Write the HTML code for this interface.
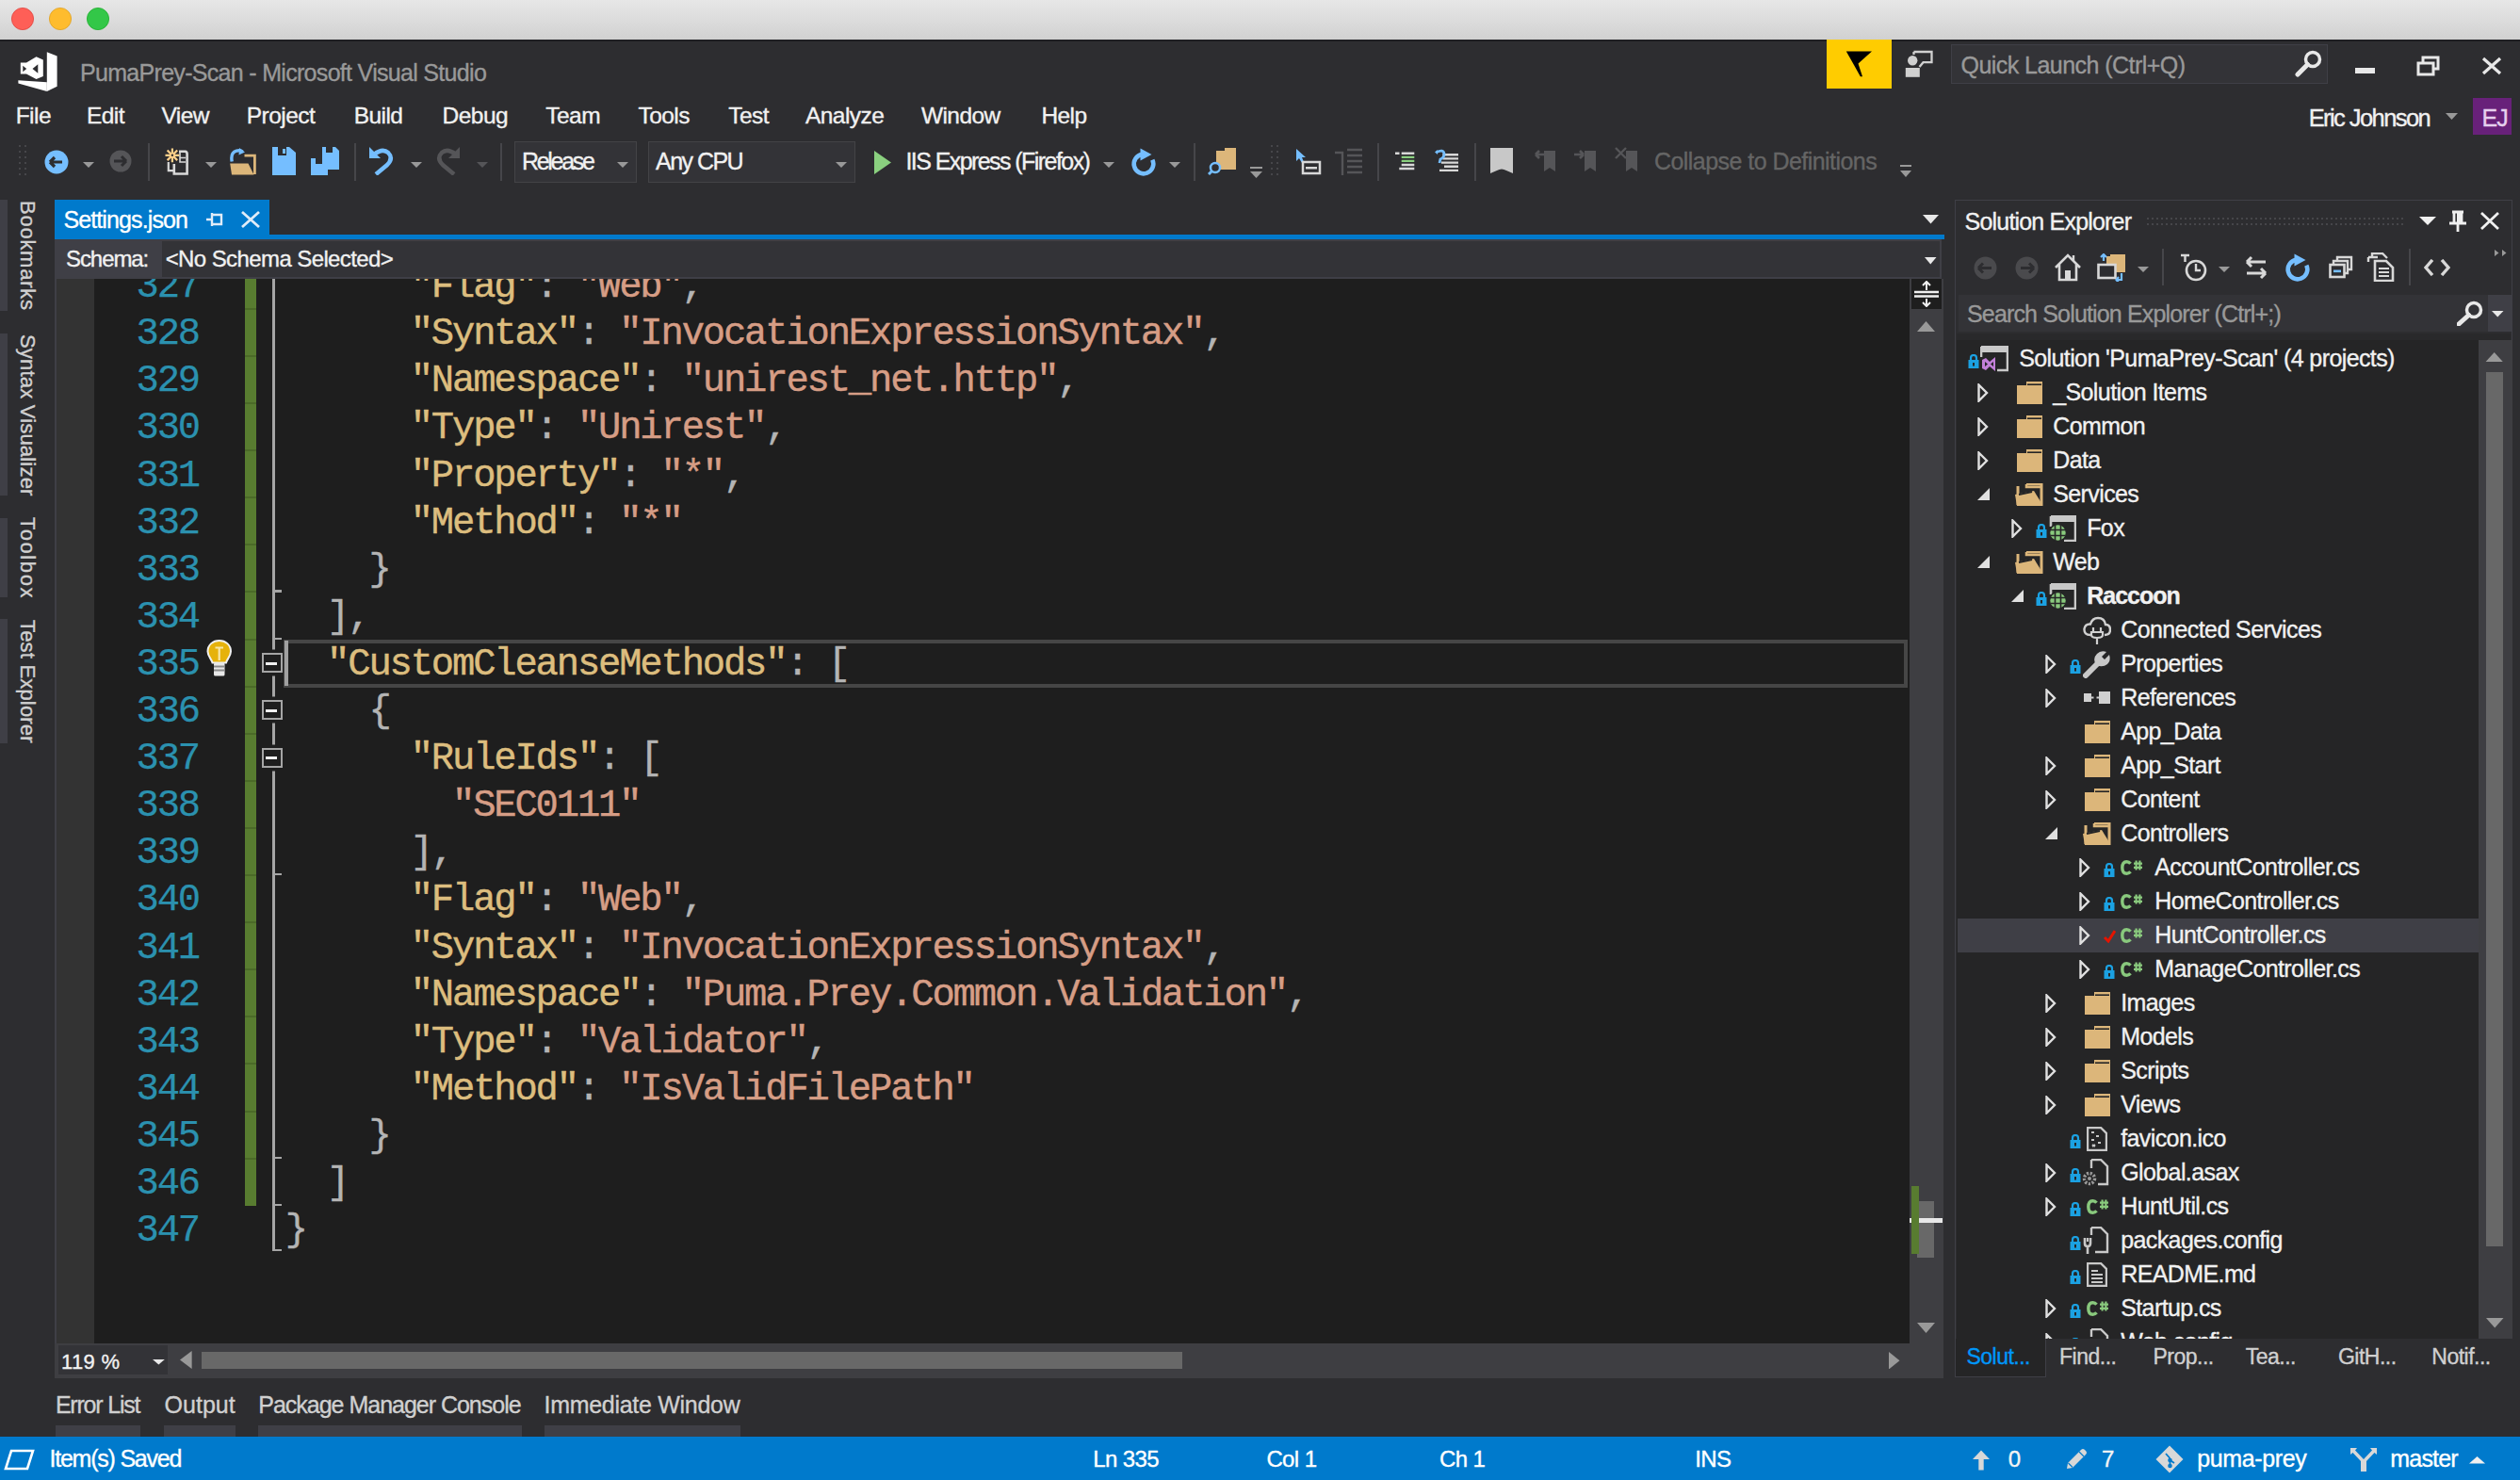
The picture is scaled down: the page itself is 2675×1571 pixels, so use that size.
<!DOCTYPE html>
<html><head><meta charset="utf-8"><style>
html,body{margin:0;padding:0;}
body{width:2675px;height:1571px;overflow:hidden;position:relative;background:#2d2d30;font-family:"Liberation Sans",sans-serif;}
.t{-webkit-text-stroke:0.35px currentColor;}
</style></head><body>
<div style="position:absolute;left:0px;top:0px;width:2675px;height:42px;background:linear-gradient(#e7e7e7,#d1d1d1);"></div>
<div style="position:absolute;left:0px;top:42px;width:2675px;height:2px;background:#1f1f23;"></div>
<svg style="position:absolute;left:11px;top:7px;" width="26" height="26" viewBox="0 0 26 26"><circle cx="13" cy="13" r="11.6" fill="#fe5f57" stroke="#e0443e" stroke-width="0.8"/></svg>
<svg style="position:absolute;left:50.8px;top:7px;" width="26" height="26" viewBox="0 0 26 26"><circle cx="13" cy="13" r="11.6" fill="#febc2e" stroke="#dea123" stroke-width="0.8"/></svg>
<svg style="position:absolute;left:90.9px;top:7px;" width="26" height="26" viewBox="0 0 26 26"><circle cx="13" cy="13" r="11.6" fill="#33c748" stroke="#1dad2b" stroke-width="0.8"/></svg>
<svg style="position:absolute;left:15px;top:50px;" width="55" height="52" viewBox="15 50 55 52"><path d="M49.8 55.3 L60.6 59.5 L60.6 91.8 L49.8 97 Z" fill="#fff"/><path d="M19.4 85.2 L49.8 87.3 L49.8 97 L19.4 88.4 Z" fill="#fff"/><path d="M21.8 66.5 L28 66.5 L38.5 60.3 L45.8 63.5 L45.8 81 L38.5 84 L28 78.5 L21.8 78.5 Z M24.3 69.8 L28.2 73 L24.3 76.2 Z M34.5 73 L40.3 68.3 L40.3 77.8 Z" fill="#fff" fill-rule="evenodd"/></svg>
<div class="t" style="position:absolute;left:85px;top:60.93px;font-family:'Liberation Sans', sans-serif;font-size:25px;line-height:32px;color:#999999;white-space:pre;font-weight:normal;letter-spacing:-0.691px;">PumaPrey-Scan - Microsoft Visual Studio</div>
<div style="position:absolute;left:1938.5px;top:42px;width:69.2px;height:52.4px;background:#ffcc00;"></div>
<svg style="position:absolute;left:1955px;top:50px;" width="36" height="36" viewBox="1955 50 36 36"><path d="M1959.8 54.6 L1987 54.6 L1972.5 67.5 L1977 81.2 L1974.8 81.2 L1968 69 Z" fill="#000"/></svg>
<svg style="position:absolute;left:2020px;top:52px;" width="34" height="32" viewBox="2020 52 34 32"><circle cx="2030.2" cy="64.2" r="5.2" fill="#d0d0d0"/><path d="M2022.8 72 L2037.8 72 L2037.8 81.8 L2022.8 81.8 Z" fill="#d0d0d0"/><path d="M2031.5 55 L2050.5 55 L2050.5 66.2 L2041.5 66.2 L2037.5 71 M2031.5 55 L2031.5 58" fill="none" stroke="#d0d0d0" stroke-width="2.3"/></svg>
<div style="position:absolute;left:2071px;top:46.7px;width:400px;height:42.8px;background:#333337;border:1.5px solid #3f3f46;box-sizing:border-box"></div>
<div class="t" style="position:absolute;left:2081.5px;top:53.33px;font-family:'Liberation Sans', sans-serif;font-size:25px;line-height:32px;color:#999999;white-space:pre;font-weight:normal;letter-spacing:-0.545px;">Quick Launch (Ctrl+Q)</div>
<svg style="position:absolute;left:2436px;top:53px;" width="30" height="29" viewBox="0 0 30 29"><circle cx="19" cy="10" r="7.5" fill="none" stroke="#e8e8e8" stroke-width="3.5"/><path d="M13.5 15.5 L3 26" stroke="#e8e8e8" stroke-width="5" stroke-linecap="round"/></svg>
<div style="position:absolute;left:2500px;top:71.5px;width:21px;height:6.5px;background:#e8e8e8;"></div>
<svg style="position:absolute;left:2565px;top:59px;" width="26" height="22" viewBox="0 0 26 22"><rect x="7" y="2" width="16" height="12" fill="none" stroke="#e8e8e8" stroke-width="3"/><rect x="2" y="8" width="16" height="12" fill="#2d2d30" stroke="#e8e8e8" stroke-width="3"/></svg>
<svg style="position:absolute;left:2633px;top:59px;" width="24" height="22" viewBox="0 0 24 22"><path d="M3 3 L21 19 M21 3 L3 19" stroke="#e8e8e8" stroke-width="3.2"/></svg>
<div class="t" style="position:absolute;left:16.7px;top:107.21px;font-family:'Liberation Sans', sans-serif;font-size:24.5px;line-height:32px;color:#f1f1f1;white-space:pre;font-weight:normal;letter-spacing:-0.55px;">File</div>
<div class="t" style="position:absolute;left:92px;top:107.21px;font-family:'Liberation Sans', sans-serif;font-size:24.5px;line-height:32px;color:#f1f1f1;white-space:pre;font-weight:normal;letter-spacing:-0.55px;">Edit</div>
<div class="t" style="position:absolute;left:171.4px;top:107.21px;font-family:'Liberation Sans', sans-serif;font-size:24.5px;line-height:32px;color:#f1f1f1;white-space:pre;font-weight:normal;letter-spacing:-0.55px;">View</div>
<div class="t" style="position:absolute;left:261.8px;top:107.21px;font-family:'Liberation Sans', sans-serif;font-size:24.5px;line-height:32px;color:#f1f1f1;white-space:pre;font-weight:normal;letter-spacing:-0.55px;">Project</div>
<div class="t" style="position:absolute;left:375.7px;top:107.21px;font-family:'Liberation Sans', sans-serif;font-size:24.5px;line-height:32px;color:#f1f1f1;white-space:pre;font-weight:normal;letter-spacing:-0.55px;">Build</div>
<div class="t" style="position:absolute;left:469.6px;top:107.21px;font-family:'Liberation Sans', sans-serif;font-size:24.5px;line-height:32px;color:#f1f1f1;white-space:pre;font-weight:normal;letter-spacing:-0.55px;">Debug</div>
<div class="t" style="position:absolute;left:579.3px;top:107.21px;font-family:'Liberation Sans', sans-serif;font-size:24.5px;line-height:32px;color:#f1f1f1;white-space:pre;font-weight:normal;letter-spacing:-0.55px;">Team</div>
<div class="t" style="position:absolute;left:677.5px;top:107.21px;font-family:'Liberation Sans', sans-serif;font-size:24.5px;line-height:32px;color:#f1f1f1;white-space:pre;font-weight:normal;letter-spacing:-0.55px;">Tools</div>
<div class="t" style="position:absolute;left:773.2px;top:107.21px;font-family:'Liberation Sans', sans-serif;font-size:24.5px;line-height:32px;color:#f1f1f1;white-space:pre;font-weight:normal;letter-spacing:-0.55px;">Test</div>
<div class="t" style="position:absolute;left:855px;top:107.21px;font-family:'Liberation Sans', sans-serif;font-size:24.5px;line-height:32px;color:#f1f1f1;white-space:pre;font-weight:normal;letter-spacing:-0.55px;">Analyze</div>
<div class="t" style="position:absolute;left:977.9px;top:107.21px;font-family:'Liberation Sans', sans-serif;font-size:24.5px;line-height:32px;color:#f1f1f1;white-space:pre;font-weight:normal;letter-spacing:-0.55px;">Window</div>
<div class="t" style="position:absolute;left:1105.4px;top:107.21px;font-family:'Liberation Sans', sans-serif;font-size:24.5px;line-height:32px;color:#f1f1f1;white-space:pre;font-weight:normal;letter-spacing:-0.55px;">Help</div>
<div class="t" style="position:absolute;left:2450.7px;top:108.66px;font-family:'Liberation Sans', sans-serif;font-size:25.5px;line-height:33px;color:#f1f1f1;white-space:pre;font-weight:normal;letter-spacing:-1.584px;">Eric Johnson</div>
<svg style="position:absolute;left:2596px;top:120px;" width="14" height="8" viewBox="0 0 14 8"><path d="M0 0 L13 0 L6.5 7 Z" fill="#999"/></svg>
<div style="position:absolute;left:2625px;top:104px;width:40.5px;height:39px;background:#68217a;"></div>
<div class="t" style="position:absolute;left:2634.5px;top:109.33px;font-family:'Liberation Sans', sans-serif;font-size:25px;line-height:32px;color:#e6d0ee;white-space:pre;font-weight:normal;letter-spacing:-1px;">EJ</div>
<svg style="position:absolute;left:20px;top:154px;" width="10" height="34" viewBox="0 0 10 34"><rect x="0" y="0" width="2" height="2" fill="#46464a"/><rect x="6" y="0" width="2" height="2" fill="#46464a"/><rect x="0" y="6" width="2" height="2" fill="#46464a"/><rect x="6" y="6" width="2" height="2" fill="#46464a"/><rect x="0" y="12" width="2" height="2" fill="#46464a"/><rect x="6" y="12" width="2" height="2" fill="#46464a"/><rect x="0" y="18" width="2" height="2" fill="#46464a"/><rect x="6" y="18" width="2" height="2" fill="#46464a"/><rect x="0" y="24" width="2" height="2" fill="#46464a"/><rect x="6" y="24" width="2" height="2" fill="#46464a"/><rect x="0" y="30" width="2" height="2" fill="#46464a"/><rect x="6" y="30" width="2" height="2" fill="#46464a"/></svg>
<svg style="position:absolute;left:47px;top:158.5px;" width="26" height="26" viewBox="0 0 26 26"><circle cx="13" cy="13" r="12.5" fill="#75beff"/><path d="M6 13 L19 13 M6 13 L11 8 M6 13 L11 18" stroke="#2d2d30" stroke-width="3.2" fill="none"/></svg>
<svg style="position:absolute;left:88px;top:170px;" width="13" height="9" viewBox="0 0 13 9"><path d="M0 2 L12 2 L6 8 Z" fill="#999"/></svg>
<svg style="position:absolute;left:116px;top:159px;" width="24" height="24" viewBox="0 0 24 24"><circle cx="12" cy="12" r="11.5" fill="#555558"/><path d="M18 12 L5 12 M18 12 L13 7 M18 12 L13 17" stroke="#2d2d30" stroke-width="3" fill="none"/></svg>
<div style="position:absolute;left:157px;top:152px;width:2px;height:39.69999999999999px;background:#46464a;"></div>
<svg style="position:absolute;left:174px;top:155px;" width="28" height="33" viewBox="174 155 28 33"><path d="M190 160.8 L196.5 160.8 Q198.6 161 198.6 163.5 L198.6 184.5 L184.8 184.5 L184.8 174" fill="none" stroke="#d8d8d8" stroke-width="2.6"/><path d="M178.8 172 L178.8 181.2 L184 181.2" fill="none" stroke="#d8d8d8" stroke-width="2.2"/><path d="M191 167.5 L197 167.5 M191 162 L191 172 L197 172" fill="none" stroke="#d8d8d8" stroke-width="1.6"/><g stroke="#ffd08a" stroke-width="2.2"><path d="M182.9 157.4 L182.9 172.2 M175.5 164.8 L190.3 164.8 M177.6 159.5 L188.2 170.1 M188.2 159.5 L177.6 170.1"/></g><circle cx="182.9" cy="164.8" r="1.2" fill="#2d2d30"/></svg>
<svg style="position:absolute;left:218px;top:170px;" width="13" height="9" viewBox="0 0 13 9"><path d="M0 2 L12 2 L6 8 Z" fill="#999"/></svg>
<svg style="position:absolute;left:242px;top:155px;" width="32" height="33" viewBox="242 155 32 33"><path d="M259.5 165.2 L270.4 165.2 L270.4 185" fill="none" stroke="#dcb67a" stroke-width="2.8"/><path d="M244.2 173.5 L263.5 173.5 L269.5 185.6 L246 185.6 Z" fill="#dcb67a"/><path d="M246.2 171.5 Q244.5 162 251 160.2 Q255 159 257.5 161" fill="none" stroke="#75beff" stroke-width="3.4"/><path d="M254 157 L260 161.5 L253.5 164.5 Z" fill="#75beff"/></svg>
<svg style="position:absolute;left:289px;top:156px;" width="26" height="30" viewBox="0 0 26 30"><path d="M0 0 L18 0 L25 6 L25 30 L0 30 Z" fill="#75beff"/><rect x="6" y="0" width="9" height="9" fill="#2d2d30"/><rect x="11" y="2" width="3" height="5" fill="#75beff"/></svg>
<svg style="position:absolute;left:330px;top:156px;" width="31" height="31" viewBox="0 0 31 31"><path d="M12 0 L26 0 L30 4 L30 24 L12 24 Z" fill="#75beff"/><rect x="16" y="0" width="7" height="6" fill="#2d2d30"/><path d="M0 12 L14 12 L18 16 L18 30 L0 30 Z" fill="#75beff"/><rect x="5" y="12" width="7" height="6" fill="#2d2d30"/></svg>
<div style="position:absolute;left:375.7px;top:152px;width:2px;height:39.69999999999999px;background:#46464a;"></div>
<svg style="position:absolute;left:392px;top:156px;" width="27" height="30" viewBox="0 0 27 30"><path d="M5 8 Q14 1 20 6 Q26 12 19 19 L7 29" stroke="#75beff" stroke-width="4.5" fill="none"/><path d="M0 0 L0 12 L12 12 Z" fill="#75beff"/></svg>
<svg style="position:absolute;left:435.7px;top:170px;" width="13" height="9" viewBox="0 0 13 9"><path d="M0 2 L12 2 L6 8 Z" fill="#999"/></svg>
<svg style="position:absolute;left:463px;top:156px;" width="26" height="30" viewBox="0 0 26 30"><path d="M21 8 Q12 1 6 6 Q0 12 7 19 L19 29" stroke="#555558" stroke-width="4.5" fill="none"/><path d="M25 0 L25 12 L13 12 Z" fill="#555558"/></svg>
<svg style="position:absolute;left:505.7px;top:170px;" width="13" height="9" viewBox="0 0 13 9"><path d="M0 2 L12 2 L6 8 Z" fill="#555558"/></svg>
<div style="position:absolute;left:531.4px;top:152px;width:2px;height:39.69999999999999px;background:#46464a;"></div>
<div style="position:absolute;left:546px;top:150.3px;width:129.7px;height:43.3px;background:#333337;border:1.5px solid #434346;box-sizing:border-box"></div>
<div class="t" style="position:absolute;left:553.9px;top:155.33px;font-family:'Liberation Sans', sans-serif;font-size:25px;line-height:32px;color:#f1f1f1;white-space:pre;font-weight:normal;letter-spacing:-2.272px;">Release</div>
<svg style="position:absolute;left:655.4px;top:170px;" width="13" height="9" viewBox="0 0 13 9"><path d="M0 2 L12 2 L6 8 Z" fill="#999"/></svg>
<div style="position:absolute;left:688.1px;top:150.3px;width:219.6px;height:43.3px;background:#333337;border:1.5px solid #434346;box-sizing:border-box"></div>
<div class="t" style="position:absolute;left:696px;top:155.33px;font-family:'Liberation Sans', sans-serif;font-size:25px;line-height:32px;color:#f1f1f1;white-space:pre;font-weight:normal;letter-spacing:-1.535px;">Any CPU</div>
<svg style="position:absolute;left:886.9px;top:170px;" width="13" height="9" viewBox="0 0 13 9"><path d="M0 2 L12 2 L6 8 Z" fill="#999"/></svg>
<svg style="position:absolute;left:928px;top:159.5px;" width="19" height="25" viewBox="0 0 19 25"><path d="M0 0 L18 12.5 L0 25 Z" fill="#8ad07f"/></svg>
<div class="t" style="position:absolute;left:961.4px;top:155.33px;font-family:'Liberation Sans', sans-serif;font-size:25px;line-height:32px;color:#f1f1f1;white-space:pre;font-weight:normal;letter-spacing:-1.566px;">IIS Express (Firefox)</div>
<svg style="position:absolute;left:1171px;top:170px;" width="13" height="9" viewBox="0 0 13 9"><path d="M0 2 L12 2 L6 8 Z" fill="#999"/></svg>
<svg style="position:absolute;left:1197.5px;top:156.5px;" width="32" height="33" viewBox="1197.5 156.5 32 33"><path d="M1222.83 169.15 A10.3 10.3 0 1 1 1211.71 163.36" stroke="#75beff" stroke-width="4.6" fill="none"/><path d="M1210.00 157.00 L1222.00 163.50 L1210.00 170.00 Z" fill="#75beff"/></svg>
<svg style="position:absolute;left:1241px;top:170px;" width="13" height="9" viewBox="0 0 13 9"><path d="M0 2 L12 2 L6 8 Z" fill="#999"/></svg>
<div style="position:absolute;left:1266.9px;top:152px;width:2px;height:39.69999999999999px;background:#46464a;"></div>
<svg style="position:absolute;left:1282px;top:156px;" width="31" height="31" viewBox="0 0 31 31"><path d="M9 4 L18 4 L18 1 L30 1 L30 24 L9 24 Z" fill="#dcb67a"/><circle cx="8" cy="22" r="5" fill="#2d2d30" stroke="#75beff" stroke-width="2.5"/><path d="M4.5 25.5 L1 29" stroke="#75beff" stroke-width="3"/></svg>
<svg style="position:absolute;left:1326.8px;top:176.8px;" width="14" height="13" viewBox="0 0 14 13"><rect x="0" y="0" width="13" height="2" fill="#999"/><path d="M0 5 L13 5 L6.5 12 Z" fill="#999"/></svg>
<svg style="position:absolute;left:1349px;top:154px;" width="10" height="34" viewBox="0 0 10 34"><rect x="0" y="0" width="2" height="2" fill="#46464a"/><rect x="6" y="0" width="2" height="2" fill="#46464a"/><rect x="0" y="6" width="2" height="2" fill="#46464a"/><rect x="6" y="6" width="2" height="2" fill="#46464a"/><rect x="0" y="12" width="2" height="2" fill="#46464a"/><rect x="6" y="12" width="2" height="2" fill="#46464a"/><rect x="0" y="18" width="2" height="2" fill="#46464a"/><rect x="6" y="18" width="2" height="2" fill="#46464a"/><rect x="0" y="24" width="2" height="2" fill="#46464a"/><rect x="6" y="24" width="2" height="2" fill="#46464a"/><rect x="0" y="30" width="2" height="2" fill="#46464a"/><rect x="6" y="30" width="2" height="2" fill="#46464a"/></svg>
<svg style="position:absolute;left:1375px;top:157px;" width="28" height="29" viewBox="0 0 28 29"><path d="M1 1 L1 14 L4 11 L7 16 L9 15 L7 10 L11 10 Z" fill="#75beff"/><rect x="8" y="15" width="18" height="12" fill="none" stroke="#d8d8d8" stroke-width="2.5"/><rect x="11" y="20" width="12" height="2.5" fill="#d8d8d8"/></svg>
<svg style="position:absolute;left:1416px;top:156px;" width="31" height="31" viewBox="0 0 31 31"><g stroke="#555558" stroke-width="2.4" fill="none"><path d="M1 6 L9 6 L9 30"/><path d="M14 3 L30 3 M14 9 L30 9 M14 15 L30 15 M14 21 L30 21 M14 27 L30 27"/></g></svg>
<div style="position:absolute;left:1461.5px;top:152px;width:2px;height:39.69999999999999px;background:#46464a;"></div>
<svg style="position:absolute;left:1479px;top:159px;" width="24" height="23" viewBox="0 0 24 23"><g stroke-width="2.4"><path d="M2 3.8 L6.5 3.8 M8.7 3.8 L22.3 3.8 M8.7 16 L22.3 16 M6.3 20 L22.3 20" stroke="#d8d8d8"/><path d="M8.7 7.9 L22.3 7.9 M8.7 11.9 L22.3 11.9" stroke="#8ad07f"/></g></svg>
<svg style="position:absolute;left:1521px;top:157px;" width="29" height="29" viewBox="0 0 29 29"><g stroke="#d8d8d8" stroke-width="2.4"><path d="M10.4 7.3 L27 7.3 M10.4 11.4 L27 11.4 M9 15.6 L27 15.6 M12 19.7 L27 19.7 M7 23.9 L27 23.9"/></g><path d="M2 4.5 L5 2 L5 7 Z" fill="#75beff"/><path d="M4 4.5 Q11 1 12 6 Q12.5 10 8 12 L7 16" stroke="#75beff" stroke-width="2.8" fill="none"/></svg>
<div style="position:absolute;left:1565px;top:152px;width:2px;height:39.69999999999999px;background:#46464a;"></div>
<svg style="position:absolute;left:1582px;top:157px;" width="25" height="28" viewBox="0 0 25 28"><path d="M0 0 L24 0 L24 27 L17 24 Q12 21 7 24 L0 27 Z" fill="#c8c8c8"/></svg>
<svg style="position:absolute;left:1628px;top:157px;" width="25" height="27" viewBox="0 0 25 27"><path d="M11 3 L23 3 L23 25 L17 21 L11 25 Z" fill="#555558"/><path d="M2 7 L12 7 M2 7 L6 3 M2 7 L6 11" stroke="#555558" stroke-width="2.6" fill="none"/></svg>
<svg style="position:absolute;left:1670px;top:157px;" width="25" height="27" viewBox="0 0 25 27"><path d="M12 3 L24 3 L24 25 L18 21 L12 25 Z" fill="#555558"/><path d="M1 7 L11 7 M11 7 L7 3 M11 7 L7 11" stroke="#555558" stroke-width="2.6" fill="none"/></svg>
<svg style="position:absolute;left:1714px;top:156px;" width="25" height="28" viewBox="0 0 25 28"><path d="M12 4 L24 4 L24 26 L18 22 L12 26 Z" fill="#555558"/><path d="M1 1 L12 12 M12 1 L1 12" stroke="#555558" stroke-width="2.4" fill="none"/></svg>
<div class="t" style="position:absolute;left:1756px;top:155.33px;font-family:'Liberation Sans', sans-serif;font-size:25px;line-height:32px;color:#656565;white-space:pre;font-weight:normal;letter-spacing:-0.548px;">Collapse to Definitions</div>
<svg style="position:absolute;left:2017px;top:175px;" width="13" height="15" viewBox="0 0 13 15"><rect x="0" y="0" width="12" height="2" fill="#999"/><path d="M0 6 L12 6 L6 13 Z" fill="#999"/></svg>
<div style="position:absolute;left:0px;top:212px;width:7.7px;height:118px;background:#3f3f46;"></div>
<div class="t" style="position:absolute;left:43.73px;top:213.00px;font-family:'Liberation Sans', sans-serif;font-size:22px;line-height:29px;color:#d0d0d0;white-space:pre;font-weight:normal;letter-spacing:0.744px;transform-origin:0 0;transform:rotate(90deg);">Bookmarks</div>
<div style="position:absolute;left:0px;top:354px;width:7.7px;height:172px;background:#3f3f46;"></div>
<div class="t" style="position:absolute;left:43.73px;top:354.60px;font-family:'Liberation Sans', sans-serif;font-size:22px;line-height:29px;color:#d0d0d0;white-space:pre;font-weight:normal;letter-spacing:0.191px;transform-origin:0 0;transform:rotate(90deg);">Syntax Visualizer</div>
<div style="position:absolute;left:0px;top:550px;width:7.7px;height:84px;background:#3f3f46;"></div>
<div class="t" style="position:absolute;left:43.73px;top:549.00px;font-family:'Liberation Sans', sans-serif;font-size:22px;line-height:29px;color:#d0d0d0;white-space:pre;font-weight:normal;letter-spacing:1.626px;transform-origin:0 0;transform:rotate(90deg);">Toolbox</div>
<div style="position:absolute;left:0px;top:657.4px;width:7.7px;height:131.80000000000007px;background:#3f3f46;"></div>
<div class="t" style="position:absolute;left:43.73px;top:658.40px;font-family:'Liberation Sans', sans-serif;font-size:22px;line-height:29px;color:#d0d0d0;white-space:pre;font-weight:normal;letter-spacing:0.184px;transform-origin:0 0;transform:rotate(90deg);">Test Explorer</div>
<div style="position:absolute;left:57.6px;top:211.5px;width:228.4px;height:42.5px;background:#007acc;"></div>
<div style="position:absolute;left:57.6px;top:249px;width:2006px;height:5px;background:#007acc;"></div>
<div class="t" style="position:absolute;left:67.4px;top:217.33px;font-family:'Liberation Sans', sans-serif;font-size:25px;line-height:32px;color:#ffffff;white-space:pre;font-weight:normal;letter-spacing:-0.878px;">Settings.json</div>
<svg style="position:absolute;left:218px;top:224px;" width="19" height="18" viewBox="0 0 19 18"><path d="M1 9 L7 9 M7 2 L7 16 M7 4 L17 4 L17 14 L7 14" stroke="#e0ecf8" stroke-width="2.4" fill="none"/></svg>
<svg style="position:absolute;left:255px;top:223px;" width="22" height="20" viewBox="0 0 22 20"><path d="M2 2 L20 18 M20 2 L2 18" stroke="#e0ecf8" stroke-width="2.8"/></svg>
<svg style="position:absolute;left:2041px;top:228px;" width="17" height="10" viewBox="0 0 17 10"><path d="M0 0 L17 0 L8.5 9.5 Z" fill="#e8e8e8"/></svg>
<div style="position:absolute;left:57.6px;top:254px;width:2003px;height:42px;background:#3f3f46;"></div>
<div style="position:absolute;left:171.7px;top:255.9px;width:1887px;height:37.7px;background:#333337;"></div>
<div class="t" style="position:absolute;left:70px;top:259.18px;font-family:'Liberation Sans', sans-serif;font-size:24px;line-height:31px;color:#f1f1f1;white-space:pre;font-weight:normal;letter-spacing:-1.070px;">Schema:</div>
<div class="t" style="position:absolute;left:175.7px;top:259.18px;font-family:'Liberation Sans', sans-serif;font-size:24px;line-height:31px;color:#f1f1f1;white-space:pre;font-weight:normal;letter-spacing:-0.595px;">&lt;No Schema Selected&gt;</div>
<svg style="position:absolute;left:2043px;top:272.5px;" width="13" height="8" viewBox="0 0 13 8"><path d="M0 0 L12.5 0 L6.25 7.5 Z" fill="#e8e8e8"/></svg>
<div style="position:absolute;left:57.6px;top:296px;width:2.2px;height:1130px;background:#3f3f46;"></div>
<div style="position:absolute;left:59.8px;top:296px;width:40.2px;height:1130px;background:#333333;"></div>
<div style="position:absolute;left:100px;top:296px;width:1927px;height:1130px;background:#1e1e1e;"></div>
<div style="position:absolute;left:57.6px;top:296px;width:1969.4px;height:1130px;overflow:hidden">
<div style="position:absolute;left:243.4px;top:382.5px;width:1723.7px;height:51.1px;border:4.5px solid #464646;box-sizing:border-box"></div>
<div style="position:absolute;left:244.4px;top:383.5px;width:4px;height:48.1px;background:#a0a0a0"></div>
<div style="position:absolute;left:202.20000000000002px;top:0px;width:12px;height:983.7px;background:#587c30"></div>
<div style="position:absolute;left:202.20000000000002px;top:30.80000000000001px;width:12px;height:2px;background:#4b6a28"></div>
<div style="position:absolute;left:202.20000000000002px;top:80.89999999999998px;width:12px;height:2px;background:#4b6a28"></div>
<div style="position:absolute;left:202.20000000000002px;top:131.0px;width:12px;height:2px;background:#4b6a28"></div>
<div style="position:absolute;left:202.20000000000002px;top:181.10000000000002px;width:12px;height:2px;background:#4b6a28"></div>
<div style="position:absolute;left:202.20000000000002px;top:231.20000000000005px;width:12px;height:2px;background:#4b6a28"></div>
<div style="position:absolute;left:202.20000000000002px;top:281.29999999999995px;width:12px;height:2px;background:#4b6a28"></div>
<div style="position:absolute;left:202.20000000000002px;top:331.4px;width:12px;height:2px;background:#4b6a28"></div>
<div style="position:absolute;left:202.20000000000002px;top:381.5px;width:12px;height:2px;background:#4b6a28"></div>
<div style="position:absolute;left:202.20000000000002px;top:431.6px;width:12px;height:2px;background:#4b6a28"></div>
<div style="position:absolute;left:202.20000000000002px;top:481.70000000000005px;width:12px;height:2px;background:#4b6a28"></div>
<div style="position:absolute;left:202.20000000000002px;top:531.8px;width:12px;height:2px;background:#4b6a28"></div>
<div style="position:absolute;left:202.20000000000002px;top:581.9000000000001px;width:12px;height:2px;background:#4b6a28"></div>
<div style="position:absolute;left:202.20000000000002px;top:632.0px;width:12px;height:2px;background:#4b6a28"></div>
<div style="position:absolute;left:202.20000000000002px;top:682.0999999999999px;width:12px;height:2px;background:#4b6a28"></div>
<div style="position:absolute;left:202.20000000000002px;top:732.2px;width:12px;height:2px;background:#4b6a28"></div>
<div style="position:absolute;left:202.20000000000002px;top:782.3px;width:12px;height:2px;background:#4b6a28"></div>
<div style="position:absolute;left:202.20000000000002px;top:832.4000000000001px;width:12px;height:2px;background:#4b6a28"></div>
<div style="position:absolute;left:202.20000000000002px;top:882.5px;width:12px;height:2px;background:#4b6a28"></div>
<div style="position:absolute;left:202.20000000000002px;top:932.5999999999999px;width:12px;height:2px;background:#4b6a28"></div>
<div style="position:absolute;left:86.9px;top:-16.83px;font-family:'Liberation Mono', monospace;font-size:40.5px;line-height:50.1px;letter-spacing:-2.154px;color:#2b91af;white-space:pre;-webkit-text-stroke:0.25px #2b91af">327</div>
<div style="position:absolute;left:378.10px;top:-16.83px;font-family:'Liberation Mono', monospace;font-size:40.5px;line-height:50.1px;letter-spacing:-2.154px;white-space:pre;-webkit-text-stroke:0.45px currentColor"><span style="color:#dcbd7e">"Flag"</span><span style="color:#b4b4b4">: </span><span style="color:#d69d85">"Web"</span><span style="color:#b4b4b4">,</span></div>
<div style="position:absolute;left:86.9px;top:33.27px;font-family:'Liberation Mono', monospace;font-size:40.5px;line-height:50.1px;letter-spacing:-2.154px;color:#2b91af;white-space:pre;-webkit-text-stroke:0.25px #2b91af">328</div>
<div style="position:absolute;left:378.10px;top:33.27px;font-family:'Liberation Mono', monospace;font-size:40.5px;line-height:50.1px;letter-spacing:-2.154px;white-space:pre;-webkit-text-stroke:0.45px currentColor"><span style="color:#dcbd7e">"Syntax"</span><span style="color:#b4b4b4">: </span><span style="color:#d69d85">"InvocationExpressionSyntax"</span><span style="color:#b4b4b4">,</span></div>
<div style="position:absolute;left:86.9px;top:83.37px;font-family:'Liberation Mono', monospace;font-size:40.5px;line-height:50.1px;letter-spacing:-2.154px;color:#2b91af;white-space:pre;-webkit-text-stroke:0.25px #2b91af">329</div>
<div style="position:absolute;left:378.10px;top:83.37px;font-family:'Liberation Mono', monospace;font-size:40.5px;line-height:50.1px;letter-spacing:-2.154px;white-space:pre;-webkit-text-stroke:0.45px currentColor"><span style="color:#dcbd7e">"Namespace"</span><span style="color:#b4b4b4">: </span><span style="color:#d69d85">"unirest_net.http"</span><span style="color:#b4b4b4">,</span></div>
<div style="position:absolute;left:86.9px;top:133.47px;font-family:'Liberation Mono', monospace;font-size:40.5px;line-height:50.1px;letter-spacing:-2.154px;color:#2b91af;white-space:pre;-webkit-text-stroke:0.25px #2b91af">330</div>
<div style="position:absolute;left:378.10px;top:133.47px;font-family:'Liberation Mono', monospace;font-size:40.5px;line-height:50.1px;letter-spacing:-2.154px;white-space:pre;-webkit-text-stroke:0.45px currentColor"><span style="color:#dcbd7e">"Type"</span><span style="color:#b4b4b4">: </span><span style="color:#d69d85">"Unirest"</span><span style="color:#b4b4b4">,</span></div>
<div style="position:absolute;left:86.9px;top:183.57px;font-family:'Liberation Mono', monospace;font-size:40.5px;line-height:50.1px;letter-spacing:-2.154px;color:#2b91af;white-space:pre;-webkit-text-stroke:0.25px #2b91af">331</div>
<div style="position:absolute;left:378.10px;top:183.57px;font-family:'Liberation Mono', monospace;font-size:40.5px;line-height:50.1px;letter-spacing:-2.154px;white-space:pre;-webkit-text-stroke:0.45px currentColor"><span style="color:#dcbd7e">"Property"</span><span style="color:#b4b4b4">: </span><span style="color:#d69d85">"*"</span><span style="color:#b4b4b4">,</span></div>
<div style="position:absolute;left:86.9px;top:233.67px;font-family:'Liberation Mono', monospace;font-size:40.5px;line-height:50.1px;letter-spacing:-2.154px;color:#2b91af;white-space:pre;-webkit-text-stroke:0.25px #2b91af">332</div>
<div style="position:absolute;left:378.10px;top:233.67px;font-family:'Liberation Mono', monospace;font-size:40.5px;line-height:50.1px;letter-spacing:-2.154px;white-space:pre;-webkit-text-stroke:0.45px currentColor"><span style="color:#dcbd7e">"Method"</span><span style="color:#b4b4b4">: </span><span style="color:#d69d85">"*"</span></div>
<div style="position:absolute;left:86.9px;top:283.77px;font-family:'Liberation Mono', monospace;font-size:40.5px;line-height:50.1px;letter-spacing:-2.154px;color:#2b91af;white-space:pre;-webkit-text-stroke:0.25px #2b91af">333</div>
<div style="position:absolute;left:333.80px;top:283.77px;font-family:'Liberation Mono', monospace;font-size:40.5px;line-height:50.1px;letter-spacing:-2.154px;white-space:pre;-webkit-text-stroke:0.45px currentColor"><span style="color:#b4b4b4">}</span></div>
<div style="position:absolute;left:86.9px;top:333.87px;font-family:'Liberation Mono', monospace;font-size:40.5px;line-height:50.1px;letter-spacing:-2.154px;color:#2b91af;white-space:pre;-webkit-text-stroke:0.25px #2b91af">334</div>
<div style="position:absolute;left:289.50px;top:333.87px;font-family:'Liberation Mono', monospace;font-size:40.5px;line-height:50.1px;letter-spacing:-2.154px;white-space:pre;-webkit-text-stroke:0.45px currentColor"><span style="color:#b4b4b4">],</span></div>
<div style="position:absolute;left:86.9px;top:383.97px;font-family:'Liberation Mono', monospace;font-size:40.5px;line-height:50.1px;letter-spacing:-2.154px;color:#2b91af;white-space:pre;-webkit-text-stroke:0.25px #2b91af">335</div>
<div style="position:absolute;left:289.50px;top:383.97px;font-family:'Liberation Mono', monospace;font-size:40.5px;line-height:50.1px;letter-spacing:-2.154px;white-space:pre;-webkit-text-stroke:0.45px currentColor"><span style="color:#dcbd7e">"CustomCleanseMethods"</span><span style="color:#b4b4b4">: [</span></div>
<div style="position:absolute;left:86.9px;top:434.07px;font-family:'Liberation Mono', monospace;font-size:40.5px;line-height:50.1px;letter-spacing:-2.154px;color:#2b91af;white-space:pre;-webkit-text-stroke:0.25px #2b91af">336</div>
<div style="position:absolute;left:333.80px;top:434.07px;font-family:'Liberation Mono', monospace;font-size:40.5px;line-height:50.1px;letter-spacing:-2.154px;white-space:pre;-webkit-text-stroke:0.45px currentColor"><span style="color:#b4b4b4">{</span></div>
<div style="position:absolute;left:86.9px;top:484.17px;font-family:'Liberation Mono', monospace;font-size:40.5px;line-height:50.1px;letter-spacing:-2.154px;color:#2b91af;white-space:pre;-webkit-text-stroke:0.25px #2b91af">337</div>
<div style="position:absolute;left:378.10px;top:484.17px;font-family:'Liberation Mono', monospace;font-size:40.5px;line-height:50.1px;letter-spacing:-2.154px;white-space:pre;-webkit-text-stroke:0.45px currentColor"><span style="color:#dcbd7e">"RuleIds"</span><span style="color:#b4b4b4">: [</span></div>
<div style="position:absolute;left:86.9px;top:534.27px;font-family:'Liberation Mono', monospace;font-size:40.5px;line-height:50.1px;letter-spacing:-2.154px;color:#2b91af;white-space:pre;-webkit-text-stroke:0.25px #2b91af">338</div>
<div style="position:absolute;left:422.40px;top:534.27px;font-family:'Liberation Mono', monospace;font-size:40.5px;line-height:50.1px;letter-spacing:-2.154px;white-space:pre;-webkit-text-stroke:0.45px currentColor"><span style="color:#d69d85">"SEC0111"</span></div>
<div style="position:absolute;left:86.9px;top:584.37px;font-family:'Liberation Mono', monospace;font-size:40.5px;line-height:50.1px;letter-spacing:-2.154px;color:#2b91af;white-space:pre;-webkit-text-stroke:0.25px #2b91af">339</div>
<div style="position:absolute;left:378.10px;top:584.37px;font-family:'Liberation Mono', monospace;font-size:40.5px;line-height:50.1px;letter-spacing:-2.154px;white-space:pre;-webkit-text-stroke:0.45px currentColor"><span style="color:#b4b4b4">],</span></div>
<div style="position:absolute;left:86.9px;top:634.47px;font-family:'Liberation Mono', monospace;font-size:40.5px;line-height:50.1px;letter-spacing:-2.154px;color:#2b91af;white-space:pre;-webkit-text-stroke:0.25px #2b91af">340</div>
<div style="position:absolute;left:378.10px;top:634.47px;font-family:'Liberation Mono', monospace;font-size:40.5px;line-height:50.1px;letter-spacing:-2.154px;white-space:pre;-webkit-text-stroke:0.45px currentColor"><span style="color:#dcbd7e">"Flag"</span><span style="color:#b4b4b4">: </span><span style="color:#d69d85">"Web"</span><span style="color:#b4b4b4">,</span></div>
<div style="position:absolute;left:86.9px;top:684.57px;font-family:'Liberation Mono', monospace;font-size:40.5px;line-height:50.1px;letter-spacing:-2.154px;color:#2b91af;white-space:pre;-webkit-text-stroke:0.25px #2b91af">341</div>
<div style="position:absolute;left:378.10px;top:684.57px;font-family:'Liberation Mono', monospace;font-size:40.5px;line-height:50.1px;letter-spacing:-2.154px;white-space:pre;-webkit-text-stroke:0.45px currentColor"><span style="color:#dcbd7e">"Syntax"</span><span style="color:#b4b4b4">: </span><span style="color:#d69d85">"InvocationExpressionSyntax"</span><span style="color:#b4b4b4">,</span></div>
<div style="position:absolute;left:86.9px;top:734.67px;font-family:'Liberation Mono', monospace;font-size:40.5px;line-height:50.1px;letter-spacing:-2.154px;color:#2b91af;white-space:pre;-webkit-text-stroke:0.25px #2b91af">342</div>
<div style="position:absolute;left:378.10px;top:734.67px;font-family:'Liberation Mono', monospace;font-size:40.5px;line-height:50.1px;letter-spacing:-2.154px;white-space:pre;-webkit-text-stroke:0.45px currentColor"><span style="color:#dcbd7e">"Namespace"</span><span style="color:#b4b4b4">: </span><span style="color:#d69d85">"Puma.Prey.Common.Validation"</span><span style="color:#b4b4b4">,</span></div>
<div style="position:absolute;left:86.9px;top:784.77px;font-family:'Liberation Mono', monospace;font-size:40.5px;line-height:50.1px;letter-spacing:-2.154px;color:#2b91af;white-space:pre;-webkit-text-stroke:0.25px #2b91af">343</div>
<div style="position:absolute;left:378.10px;top:784.77px;font-family:'Liberation Mono', monospace;font-size:40.5px;line-height:50.1px;letter-spacing:-2.154px;white-space:pre;-webkit-text-stroke:0.45px currentColor"><span style="color:#dcbd7e">"Type"</span><span style="color:#b4b4b4">: </span><span style="color:#d69d85">"Validator"</span><span style="color:#b4b4b4">,</span></div>
<div style="position:absolute;left:86.9px;top:834.87px;font-family:'Liberation Mono', monospace;font-size:40.5px;line-height:50.1px;letter-spacing:-2.154px;color:#2b91af;white-space:pre;-webkit-text-stroke:0.25px #2b91af">344</div>
<div style="position:absolute;left:378.10px;top:834.87px;font-family:'Liberation Mono', monospace;font-size:40.5px;line-height:50.1px;letter-spacing:-2.154px;white-space:pre;-webkit-text-stroke:0.45px currentColor"><span style="color:#dcbd7e">"Method"</span><span style="color:#b4b4b4">: </span><span style="color:#d69d85">"IsValidFilePath"</span></div>
<div style="position:absolute;left:86.9px;top:884.97px;font-family:'Liberation Mono', monospace;font-size:40.5px;line-height:50.1px;letter-spacing:-2.154px;color:#2b91af;white-space:pre;-webkit-text-stroke:0.25px #2b91af">345</div>
<div style="position:absolute;left:333.80px;top:884.97px;font-family:'Liberation Mono', monospace;font-size:40.5px;line-height:50.1px;letter-spacing:-2.154px;white-space:pre;-webkit-text-stroke:0.45px currentColor"><span style="color:#b4b4b4">}</span></div>
<div style="position:absolute;left:86.9px;top:935.07px;font-family:'Liberation Mono', monospace;font-size:40.5px;line-height:50.1px;letter-spacing:-2.154px;color:#2b91af;white-space:pre;-webkit-text-stroke:0.25px #2b91af">346</div>
<div style="position:absolute;left:289.50px;top:935.07px;font-family:'Liberation Mono', monospace;font-size:40.5px;line-height:50.1px;letter-spacing:-2.154px;white-space:pre;-webkit-text-stroke:0.45px currentColor"><span style="color:#b4b4b4">]</span></div>
<div style="position:absolute;left:86.9px;top:985.17px;font-family:'Liberation Mono', monospace;font-size:40.5px;line-height:50.1px;letter-spacing:-2.154px;color:#2b91af;white-space:pre;-webkit-text-stroke:0.25px #2b91af">347</div>
<div style="position:absolute;left:245.20px;top:985.17px;font-family:'Liberation Mono', monospace;font-size:40.5px;line-height:50.1px;letter-spacing:-2.154px;white-space:pre;-webkit-text-stroke:0.45px currentColor"><span style="color:#b4b4b4">}</span></div>
<div style="position:absolute;left:231.6px;top:0px;width:2.6px;height:1030.8000000000002px;background:#a5a5a5"></div>
<div style="position:absolute;left:231.6px;top:330.4px;width:10px;height:2.4px;background:#a5a5a5"></div>
<div style="position:absolute;left:231.6px;top:380.5px;width:10px;height:2.4px;background:#a5a5a5"></div>
<div style="position:absolute;left:231.6px;top:631.0px;width:10px;height:2.4px;background:#a5a5a5"></div>
<div style="position:absolute;left:231.6px;top:931.5999999999999px;width:10px;height:2.4px;background:#a5a5a5"></div>
<div style="position:absolute;left:231.6px;top:981.7px;width:10px;height:2.4px;background:#a5a5a5"></div>
<div style="position:absolute;left:231.6px;top:1029.8000000000002px;width:10px;height:2.4px;background:#a5a5a5"></div>
<div style="position:absolute;left:220.1px;top:397.29999999999995px;width:22.6px;height:21px;border:2.6px solid #a5a5a5;box-sizing:border-box;background:#1e1e1e;box-shadow:0 -3.5px 0 #1e1e1e, 0 3.5px 0 #1e1e1e"></div>
<div style="position:absolute;left:224.4px;top:407.1px;width:12.5px;height:2.6px;background:#f0f0f0"></div>
<div style="position:absolute;left:220.1px;top:447.4px;width:22.6px;height:21px;border:2.6px solid #a5a5a5;box-sizing:border-box;background:#1e1e1e;box-shadow:0 -3.5px 0 #1e1e1e, 0 3.5px 0 #1e1e1e"></div>
<div style="position:absolute;left:224.4px;top:457.20000000000005px;width:12.5px;height:2.6px;background:#f0f0f0"></div>
<div style="position:absolute;left:220.1px;top:497.5px;width:22.6px;height:21px;border:2.6px solid #a5a5a5;box-sizing:border-box;background:#1e1e1e;box-shadow:0 -3.5px 0 #1e1e1e, 0 3.5px 0 #1e1e1e"></div>
<div style="position:absolute;left:224.4px;top:507.30000000000007px;width:12.5px;height:2.6px;background:#f0f0f0"></div>
<svg style="position:absolute;left:161.4px;top:382.5px" width="28" height="40" viewBox="0 0 28 40"><path d="M13.7 1 C20.5 1 26 5.5 26 12.5 C26 17.5 22 20.5 21 24.5 L6.5 24.5 C5.5 20.5 1.5 17.5 1.5 12.5 C1.5 5.5 7 1 13.7 1 Z" fill="#e6b20b" stroke="#f0f0f0" stroke-width="2"/><path d="M9.5 8.5 L18 8.5 M13.7 8.5 L13.7 22" stroke="#f8e7a8" stroke-width="2.2"/><rect x="8" y="24.5" width="11.5" height="14" rx="1.5" fill="#e8e8e8"/><path d="M8 28.5 L19.5 28.5 M8 32.5 L19.5 32.5" stroke="#8a8a8a" stroke-width="1.8"/></svg>
</div>
<div style="position:absolute;left:2027px;top:296px;width:36px;height:1130px;background:#3e3e42;"></div>
<div style="position:absolute;left:2029px;top:296.3px;width:32px;height:31.4px;background:#1e1e1e;"></div>
<svg style="position:absolute;left:2031px;top:298px;" width="28" height="28" viewBox="0 0 28 28"><path d="M1 12 L27 12 M1 16.5 L27 16.5" stroke="#f0f0f0" stroke-width="2.4"/><path d="M14 1 L14 10 M14 19 L14 27" stroke="#f0f0f0" stroke-width="2"/><path d="M10 5 L14 1 L18 5 M10 23 L14 27 L18 23" stroke="#f0f0f0" stroke-width="2" fill="none"/></svg>
<svg style="position:absolute;left:2034.8px;top:341px;" width="19" height="11.5" viewBox="0 0 19 11.5"><path d="M0 11 L9.5 0 L19 11 Z" fill="#999999"/></svg>
<svg style="position:absolute;left:2035px;top:1404.3px;" width="19" height="11" viewBox="0 0 19 11"><path d="M0 0 L19 0 L9.5 11 Z" fill="#999999"/></svg>
<div style="position:absolute;left:2035px;top:1275px;width:18px;height:60.3px;background:#686868;"></div>
<div style="position:absolute;left:2027px;top:1293.3px;width:34.7px;height:4.6px;background:#e8e8e8;"></div>
<div style="position:absolute;left:2028.8px;top:1259px;width:8.5px;height:72px;background:#587c30;"></div>
<div style="position:absolute;left:57.6px;top:1426px;width:2005.4px;height:36.7px;background:#3e3e42;"></div>
<div style="position:absolute;left:62px;top:1427.7px;width:116px;height:31.2px;background:#333337;"></div>
<div class="t" style="position:absolute;left:65px;top:1430.87px;font-family:'Liberation Sans', sans-serif;font-size:22px;line-height:29px;color:#f1f1f1;white-space:pre;font-weight:normal;letter-spacing:0.312px;">119 %</div>
<svg style="position:absolute;left:161.6px;top:1443px;" width="13" height="6" viewBox="0 0 13 6"><path d="M0 0 L12.8 0 L6.4 5.5 Z" fill="#e8e8e8"/></svg>
<svg style="position:absolute;left:191px;top:1434px;" width="13" height="19" viewBox="0 0 13 19"><path d="M12.6 0 L12.6 19 L0 9.5 Z" fill="#999999"/></svg>
<div style="position:absolute;left:213.8px;top:1435px;width:1041.7px;height:18px;background:#686868;"></div>
<svg style="position:absolute;left:2004.5px;top:1434.7px;" width="12" height="18.5" viewBox="0 0 12 18.5"><path d="M0 0 L0 18.5 L11.5 9.25 Z" fill="#999999"/></svg>
<div class="t" style="position:absolute;left:58.9px;top:1474.63px;font-family:'Liberation Sans', sans-serif;font-size:25px;line-height:32px;color:#d0d0d0;white-space:pre;font-weight:normal;letter-spacing:-1.201px;">Error List</div>
<div style="position:absolute;left:58.9px;top:1513px;width:90.6px;height:12px;background:#3f3f46;"></div>
<div class="t" style="position:absolute;left:174.4px;top:1474.63px;font-family:'Liberation Sans', sans-serif;font-size:25px;line-height:32px;color:#d0d0d0;white-space:pre;font-weight:normal;letter-spacing:0.068px;">Output</div>
<div style="position:absolute;left:174.4px;top:1513px;width:75.4px;height:12px;background:#3f3f46;"></div>
<div class="t" style="position:absolute;left:274.3px;top:1474.63px;font-family:'Liberation Sans', sans-serif;font-size:25px;line-height:32px;color:#d0d0d0;white-space:pre;font-weight:normal;letter-spacing:-1.013px;">Package Manager Console</div>
<div style="position:absolute;left:274.3px;top:1513px;width:279.3px;height:12px;background:#3f3f46;"></div>
<div class="t" style="position:absolute;left:577.5px;top:1474.63px;font-family:'Liberation Sans', sans-serif;font-size:25px;line-height:32px;color:#d0d0d0;white-space:pre;font-weight:normal;letter-spacing:-0.292px;">Immediate Window</div>
<div style="position:absolute;left:577.5px;top:1513px;width:208.20000000000005px;height:12px;background:#3f3f46;"></div>
<div style="position:absolute;left:0px;top:1525px;width:2675px;height:46px;background:#007acc;"></div>
<svg style="position:absolute;left:3px;top:1538px;" width="34" height="23" viewBox="0 0 34 23"><path d="M9 2 L32 2 L26 21 L3 21 Z" fill="none" stroke="#ffffff" stroke-width="2.6"/></svg>
<div class="t" style="position:absolute;left:52.5px;top:1531.93px;font-family:'Liberation Sans', sans-serif;font-size:25px;line-height:32px;color:#ffffff;white-space:pre;font-weight:normal;letter-spacing:-1.226px;">Item(s) Saved</div>
<div class="t" style="position:absolute;left:1160.3px;top:1533.18px;font-family:'Liberation Sans', sans-serif;font-size:24px;line-height:31px;color:#ffffff;white-space:pre;font-weight:normal;letter-spacing:-0.6px;">Ln 335</div>
<div class="t" style="position:absolute;left:1344.4px;top:1533.18px;font-family:'Liberation Sans', sans-serif;font-size:24px;line-height:31px;color:#ffffff;white-space:pre;font-weight:normal;letter-spacing:-0.6px;">Col 1</div>
<div class="t" style="position:absolute;left:1528px;top:1533.18px;font-family:'Liberation Sans', sans-serif;font-size:24px;line-height:31px;color:#ffffff;white-space:pre;font-weight:normal;letter-spacing:-0.6px;">Ch 1</div>
<div class="t" style="position:absolute;left:1799.3px;top:1533.18px;font-family:'Liberation Sans', sans-serif;font-size:24px;line-height:31px;color:#ffffff;white-space:pre;font-weight:normal;letter-spacing:-0.6px;">INS</div>
<svg style="position:absolute;left:2093px;top:1538px;" width="20" height="23" viewBox="0 0 20 23"><path d="M1 11 L10 1.5 L19 11 Z" fill="#d8d8d8"/><rect x="7.3" y="9" width="5.4" height="13.5" fill="#d8d8d8"/></svg>
<div class="t" style="position:absolute;left:2131.7px;top:1533.18px;font-family:'Liberation Sans', sans-serif;font-size:24px;line-height:31px;color:#f4f4f4;white-space:pre;font-weight:normal;">0</div>
<svg style="position:absolute;left:2192px;top:1536px;" width="25" height="25" viewBox="0 0 25 25"><path d="M2 23 L3 17 L17 3 Q19 1 21 3 L22 4 Q24 6 22 8 L8 22 Z" fill="#d8d8d8"/><path d="M3.5 17 L8 21.5 M15 5 L20 10" stroke="#007acc" stroke-width="1.2"/></svg>
<div class="t" style="position:absolute;left:2231px;top:1533.18px;font-family:'Liberation Sans', sans-serif;font-size:24px;line-height:31px;color:#f4f4f4;white-space:pre;font-weight:normal;">7</div>
<svg style="position:absolute;left:2288px;top:1534px;" width="30" height="30" viewBox="0 0 30 30"><path d="M15 0.5 L29.5 15 L15 29.5 L0.5 15 Z" fill="#d8d8d8"/><circle cx="15.5" cy="16" r="2.3" fill="#007acc"/><circle cx="15.5" cy="22" r="2.3" fill="#007acc"/><path d="M15.5 16 L15.5 22 M11 9 L15.5 14 M15.5 16 L20 19" stroke="#007acc" stroke-width="1.8"/></svg>
<div class="t" style="position:absolute;left:2332.2px;top:1532.33px;font-family:'Liberation Sans', sans-serif;font-size:25px;line-height:32px;color:#ffffff;white-space:pre;font-weight:normal;letter-spacing:-0.375px;">puma-prey</div>
<svg style="position:absolute;left:2494px;top:1536px;" width="30" height="27" viewBox="0 0 30 27"><path d="M1 1 L8 1 L6 3.5 L15 13 L24 3.5 L22 1 L29 1 L29 8 L26.5 6 L18 15 L18 26 L12 26 L12 15 L3.5 6 L1 8 Z" fill="#d8d8d8"/></svg>
<div class="t" style="position:absolute;left:2537.3px;top:1532.33px;font-family:'Liberation Sans', sans-serif;font-size:25px;line-height:32px;color:#ffffff;white-space:pre;font-weight:normal;letter-spacing:-0.821px;">master</div>
<svg style="position:absolute;left:2620.5px;top:1546px;" width="17" height="8" viewBox="0 0 17 8"><path d="M0 7.5 L8.5 0 L17 7.5 Z" fill="#f0f0f0"/></svg>
<div style="position:absolute;left:2075.3px;top:212px;width:591.2999999999997px;height:1208.8px;background:#2d2d30;border:1.8px solid #3f3f46;border-bottom:none;box-sizing:border-box"></div>
<div class="t" style="position:absolute;left:2085.6px;top:219.33px;font-family:'Liberation Sans', sans-serif;font-size:25px;line-height:32px;color:#f1f1f1;white-space:pre;font-weight:normal;letter-spacing:-0.812px;">Solution Explorer</div>
<svg style="position:absolute;left:2279px;top:231px;" width="274" height="9" viewBox="0 0 274 9"><rect x="0" y="0" width="2" height="2" fill="#46464a"/><rect x="0" y="6" width="2" height="2" fill="#46464a"/><rect x="5" y="0" width="2" height="2" fill="#46464a"/><rect x="5" y="6" width="2" height="2" fill="#46464a"/><rect x="10" y="0" width="2" height="2" fill="#46464a"/><rect x="10" y="6" width="2" height="2" fill="#46464a"/><rect x="15" y="0" width="2" height="2" fill="#46464a"/><rect x="15" y="6" width="2" height="2" fill="#46464a"/><rect x="20" y="0" width="2" height="2" fill="#46464a"/><rect x="20" y="6" width="2" height="2" fill="#46464a"/><rect x="25" y="0" width="2" height="2" fill="#46464a"/><rect x="25" y="6" width="2" height="2" fill="#46464a"/><rect x="30" y="0" width="2" height="2" fill="#46464a"/><rect x="30" y="6" width="2" height="2" fill="#46464a"/><rect x="35" y="0" width="2" height="2" fill="#46464a"/><rect x="35" y="6" width="2" height="2" fill="#46464a"/><rect x="40" y="0" width="2" height="2" fill="#46464a"/><rect x="40" y="6" width="2" height="2" fill="#46464a"/><rect x="45" y="0" width="2" height="2" fill="#46464a"/><rect x="45" y="6" width="2" height="2" fill="#46464a"/><rect x="50" y="0" width="2" height="2" fill="#46464a"/><rect x="50" y="6" width="2" height="2" fill="#46464a"/><rect x="55" y="0" width="2" height="2" fill="#46464a"/><rect x="55" y="6" width="2" height="2" fill="#46464a"/><rect x="60" y="0" width="2" height="2" fill="#46464a"/><rect x="60" y="6" width="2" height="2" fill="#46464a"/><rect x="65" y="0" width="2" height="2" fill="#46464a"/><rect x="65" y="6" width="2" height="2" fill="#46464a"/><rect x="70" y="0" width="2" height="2" fill="#46464a"/><rect x="70" y="6" width="2" height="2" fill="#46464a"/><rect x="75" y="0" width="2" height="2" fill="#46464a"/><rect x="75" y="6" width="2" height="2" fill="#46464a"/><rect x="80" y="0" width="2" height="2" fill="#46464a"/><rect x="80" y="6" width="2" height="2" fill="#46464a"/><rect x="85" y="0" width="2" height="2" fill="#46464a"/><rect x="85" y="6" width="2" height="2" fill="#46464a"/><rect x="90" y="0" width="2" height="2" fill="#46464a"/><rect x="90" y="6" width="2" height="2" fill="#46464a"/><rect x="95" y="0" width="2" height="2" fill="#46464a"/><rect x="95" y="6" width="2" height="2" fill="#46464a"/><rect x="100" y="0" width="2" height="2" fill="#46464a"/><rect x="100" y="6" width="2" height="2" fill="#46464a"/><rect x="105" y="0" width="2" height="2" fill="#46464a"/><rect x="105" y="6" width="2" height="2" fill="#46464a"/><rect x="110" y="0" width="2" height="2" fill="#46464a"/><rect x="110" y="6" width="2" height="2" fill="#46464a"/><rect x="115" y="0" width="2" height="2" fill="#46464a"/><rect x="115" y="6" width="2" height="2" fill="#46464a"/><rect x="120" y="0" width="2" height="2" fill="#46464a"/><rect x="120" y="6" width="2" height="2" fill="#46464a"/><rect x="125" y="0" width="2" height="2" fill="#46464a"/><rect x="125" y="6" width="2" height="2" fill="#46464a"/><rect x="130" y="0" width="2" height="2" fill="#46464a"/><rect x="130" y="6" width="2" height="2" fill="#46464a"/><rect x="135" y="0" width="2" height="2" fill="#46464a"/><rect x="135" y="6" width="2" height="2" fill="#46464a"/><rect x="140" y="0" width="2" height="2" fill="#46464a"/><rect x="140" y="6" width="2" height="2" fill="#46464a"/><rect x="145" y="0" width="2" height="2" fill="#46464a"/><rect x="145" y="6" width="2" height="2" fill="#46464a"/><rect x="150" y="0" width="2" height="2" fill="#46464a"/><rect x="150" y="6" width="2" height="2" fill="#46464a"/><rect x="155" y="0" width="2" height="2" fill="#46464a"/><rect x="155" y="6" width="2" height="2" fill="#46464a"/><rect x="160" y="0" width="2" height="2" fill="#46464a"/><rect x="160" y="6" width="2" height="2" fill="#46464a"/><rect x="165" y="0" width="2" height="2" fill="#46464a"/><rect x="165" y="6" width="2" height="2" fill="#46464a"/><rect x="170" y="0" width="2" height="2" fill="#46464a"/><rect x="170" y="6" width="2" height="2" fill="#46464a"/><rect x="175" y="0" width="2" height="2" fill="#46464a"/><rect x="175" y="6" width="2" height="2" fill="#46464a"/><rect x="180" y="0" width="2" height="2" fill="#46464a"/><rect x="180" y="6" width="2" height="2" fill="#46464a"/><rect x="185" y="0" width="2" height="2" fill="#46464a"/><rect x="185" y="6" width="2" height="2" fill="#46464a"/><rect x="190" y="0" width="2" height="2" fill="#46464a"/><rect x="190" y="6" width="2" height="2" fill="#46464a"/><rect x="195" y="0" width="2" height="2" fill="#46464a"/><rect x="195" y="6" width="2" height="2" fill="#46464a"/><rect x="200" y="0" width="2" height="2" fill="#46464a"/><rect x="200" y="6" width="2" height="2" fill="#46464a"/><rect x="205" y="0" width="2" height="2" fill="#46464a"/><rect x="205" y="6" width="2" height="2" fill="#46464a"/><rect x="210" y="0" width="2" height="2" fill="#46464a"/><rect x="210" y="6" width="2" height="2" fill="#46464a"/><rect x="215" y="0" width="2" height="2" fill="#46464a"/><rect x="215" y="6" width="2" height="2" fill="#46464a"/><rect x="220" y="0" width="2" height="2" fill="#46464a"/><rect x="220" y="6" width="2" height="2" fill="#46464a"/><rect x="225" y="0" width="2" height="2" fill="#46464a"/><rect x="225" y="6" width="2" height="2" fill="#46464a"/><rect x="230" y="0" width="2" height="2" fill="#46464a"/><rect x="230" y="6" width="2" height="2" fill="#46464a"/><rect x="235" y="0" width="2" height="2" fill="#46464a"/><rect x="235" y="6" width="2" height="2" fill="#46464a"/><rect x="240" y="0" width="2" height="2" fill="#46464a"/><rect x="240" y="6" width="2" height="2" fill="#46464a"/><rect x="245" y="0" width="2" height="2" fill="#46464a"/><rect x="245" y="6" width="2" height="2" fill="#46464a"/><rect x="250" y="0" width="2" height="2" fill="#46464a"/><rect x="250" y="6" width="2" height="2" fill="#46464a"/><rect x="255" y="0" width="2" height="2" fill="#46464a"/><rect x="255" y="6" width="2" height="2" fill="#46464a"/><rect x="260" y="0" width="2" height="2" fill="#46464a"/><rect x="260" y="6" width="2" height="2" fill="#46464a"/><rect x="265" y="0" width="2" height="2" fill="#46464a"/><rect x="265" y="6" width="2" height="2" fill="#46464a"/><rect x="270" y="0" width="2" height="2" fill="#46464a"/><rect x="270" y="6" width="2" height="2" fill="#46464a"/></svg>
<svg style="position:absolute;left:2568px;top:229.5px;" width="18" height="10" viewBox="0 0 18 10"><path d="M0 0 L18 0 L9 9 Z" fill="#f0f0f0"/></svg>
<svg style="position:absolute;left:2599px;top:223px;" width="20" height="24" viewBox="0 0 20 24"><path d="M4 2 L16 2 M6 2 L6 14 M14 2 L14 14 M1 14 L19 14 M10 14 L10 23" stroke="#f0f0f0" stroke-width="2.8" fill="none"/><rect x="9" y="3" width="4" height="10" fill="#f0f0f0"/></svg>
<svg style="position:absolute;left:2632px;top:224px;" width="22" height="21" viewBox="0 0 22 21"><path d="M2 2 L20 19 M20 2 L2 19" stroke="#f0f0f0" stroke-width="2.8"/></svg>
<svg style="position:absolute;left:2095px;top:271.5px;" width="25" height="25" viewBox="0 0 25 25"><circle cx="12.5" cy="12.5" r="12" fill="#4a4a4d"/><path d="M5 12.5 L19 12.5 M5 12.5 L10 7.5 M5 12.5 L10 17.5" stroke="#2d2d30" stroke-width="3" fill="none"/></svg>
<svg style="position:absolute;left:2139px;top:271.5px;" width="25" height="25" viewBox="0 0 25 25"><circle cx="12.5" cy="12.5" r="12" fill="#4a4a4d"/><path d="M20 12.5 L6 12.5 M20 12.5 L15 7.5 M20 12.5 L15 17.5" stroke="#2d2d30" stroke-width="3" fill="none"/></svg>
<svg style="position:absolute;left:2180px;top:269px;" width="30" height="30" viewBox="0 0 30 30"><path d="M2 15 L15 2 L28 15 M6 11 L6 28 L24 28 L24 11" stroke="#d8d8d8" stroke-width="2.6" fill="none"/><rect x="12" y="18" width="6" height="10" fill="#d8d8d8"/><path d="M21 2 L21 8" stroke="#d8d8d8" stroke-width="2.4"/></svg>
<svg style="position:absolute;left:2226px;top:269px;" width="31" height="30" viewBox="0 0 31 30"><path d="M10 3 L14 3 L14 1 L30 1 L30 20 L10 20 Z" fill="#dcb67a"/><rect x="1.5" y="12" width="18" height="14" fill="#2d2d30" stroke="#d8d8d8" stroke-width="2.6"/><path d="M7 1 L7 8 M4 4 L7 1 L10 4" stroke="#75beff" stroke-width="2.2" fill="none"/><path d="M26 21 L26 28 L21 28 M23 25 L20.5 28 L23 31" stroke="#75beff" stroke-width="2.2" fill="none"/></svg>
<svg style="position:absolute;left:2269px;top:281px;" width="13" height="9" viewBox="0 0 13 9"><path d="M0 2 L12 2 L6 8 Z" fill="#999"/></svg>
<div style="position:absolute;left:2294.7px;top:264px;width:2px;height:39px;background:#46464a;"></div>
<svg style="position:absolute;left:2314px;top:269px;" width="30" height="30" viewBox="0 0 30 30"><circle cx="17" cy="18" r="10" fill="none" stroke="#d8d8d8" stroke-width="2.6"/><path d="M17 11 L17 18 L22 18" stroke="#d8d8d8" stroke-width="2.4" fill="none"/><path d="M1 2 L10 2 M5.5 2 L5.5 9" stroke="#d8d8d8" stroke-width="2.4"/></svg>
<svg style="position:absolute;left:2355px;top:281px;" width="13" height="9" viewBox="0 0 13 9"><path d="M0 2 L12 2 L6 8 Z" fill="#999"/></svg>
<svg style="position:absolute;left:2382px;top:271px;" width="26" height="26" viewBox="0 0 26 26"><path d="M3 7 L23 7 M3 7 L8 2 M3 7 L8 12 M23 19 L3 19 M23 19 L18 14 M23 19 L18 24" stroke="#d8d8d8" stroke-width="3" fill="none"/></svg>
<svg style="position:absolute;left:2423px;top:268.5px;" width="32" height="33" viewBox="2423 268.5 32 33"><path d="M2448.33 281.15 A10.3 10.3 0 1 1 2437.21 275.36" stroke="#75beff" stroke-width="4.6" fill="none"/><path d="M2435.50 269.00 L2447.50 275.50 L2435.50 282.00 Z" fill="#75beff"/></svg>
<svg style="position:absolute;left:2472px;top:270px;" width="26" height="26" viewBox="0 0 26 26"><path d="M9 7 L9 3 L24 3 L24 16 L20 16 M5 11 L5 7 L20 7 L20 20 L16 20" stroke="#d8d8d8" stroke-width="2.4" fill="none"/><rect x="1.5" y="11" width="15" height="13" fill="none" stroke="#d8d8d8" stroke-width="2.6"/><rect x="5" y="16.5" width="8" height="2.6" fill="#75beff"/></svg>
<svg style="position:absolute;left:2512px;top:268px;" width="31" height="31" viewBox="0 0 31 31"><path d="M6 6 L6 1 L17 1 L22 6 M2 10 L2 5 M2 5 L12 5" stroke="#d8d8d8" stroke-width="2.4" fill="none"/><path d="M9 9 L21 9 L28 16 L28 30 L9 30 Z" fill="none" stroke="#d8d8d8" stroke-width="2.6"/><path d="M13 17 L24 17 M13 21 L24 21 M13 25 L24 25" stroke="#d8d8d8" stroke-width="2"/></svg>
<div style="position:absolute;left:2557px;top:264px;width:2px;height:39px;background:#46464a;"></div>
<svg style="position:absolute;left:2573px;top:275px;" width="28" height="18" viewBox="0 0 28 18"><path d="M9 1 L2 9 L9 17 M19 1 L26 9 L19 17" stroke="#d8d8d8" stroke-width="3.4" fill="none"/></svg>
<svg style="position:absolute;left:2648px;top:265px;" width="13" height="7" viewBox="0 0 13 7"><path d="M0 0 L4.5 3.5 L0 7 Z M8 0 L12.5 3.5 L8 7 Z" fill="#999"/></svg>
<div style="position:absolute;left:2077px;top:310.5px;width:588px;height:44px;background:#2d2d30;"></div>
<div style="position:absolute;left:2079px;top:312.8px;width:562px;height:39.7px;background:#333337;"></div>
<div style="position:absolute;left:2641px;top:312.8px;width:25px;height:39.7px;background:#3f3f46;"></div>
<div class="t" style="position:absolute;left:2088px;top:316.53px;font-family:'Liberation Sans', sans-serif;font-size:25px;line-height:32px;color:#999999;white-space:pre;font-weight:normal;letter-spacing:-0.839px;">Search Solution Explorer (Ctrl+;)</div>
<svg style="position:absolute;left:2608px;top:319px;" width="28" height="27" viewBox="0 0 28 27"><circle cx="18" cy="10" r="7.5" fill="none" stroke="#e8e8e8" stroke-width="3.5"/><path d="M12.5 15.5 L2 25" stroke="#e8e8e8" stroke-width="5" stroke-linecap="round"/></svg>
<svg style="position:absolute;left:2645px;top:329.5px;" width="13" height="7" viewBox="0 0 13 7"><path d="M0 0 L12.5 0 L6.25 6.5 Z" fill="#e8e8e8"/></svg>
<div style="position:absolute;left:2077px;top:354px;width:587.8px;height:1066.8px;background:#252526;"></div>
<div style="position:absolute;left:2077px;top:354px;width:587.8px;height:7px;background:#29292b;"></div>
<div style="position:absolute;left:2631px;top:361.4px;width:35.5px;height:1059.4px;background:#3e3e42;"></div>
<svg style="position:absolute;left:2638.3px;top:373.5px;" width="19.4" height="10.7" viewBox="0 0 19.4 10.7"><path d="M0 10.7 L9.7 0 L19.4 10.7 Z" fill="#999999"/></svg>
<div style="position:absolute;left:2639px;top:395.4px;width:18.2px;height:927.6px;background:#686868;"></div>
<svg style="position:absolute;left:2639px;top:1399px;" width="18.5" height="10.6" viewBox="0 0 18.5 10.6"><path d="M0 0 L18.5 0 L9.25 10.6 Z" fill="#999999"/></svg>
<div style="position:absolute;left:2077px;top:361.4px;width:554px;height:1059.4px;overflow:hidden">
<svg style="position:absolute;left:11.70px;top:14.60px" width="12" height="15" viewBox="0 0 12 15"><path d="M3 6 L3 4 Q3 1 6 1 Q9 1 9 4 L9 6" stroke="#1ba1e2" stroke-width="2.2" fill="none"/><rect x="0.5" y="6" width="11" height="9" fill="#1ba1e2"/><rect x="5" y="9" width="2" height="3.5" fill="#252526"/></svg>
<svg style="position:absolute;left:25.40px;top:5.60px" width="30" height="28" viewBox="0 0 30 28"><path d="M1 1 L29 1 L29 26 L18 26" stroke="#c8c8c8" stroke-width="2.6" fill="none"/><rect x="1" y="1" width="28" height="6" fill="#c8c8c8"/><path d="M1 1 L1 12" stroke="#c8c8c8" stroke-width="2.6"/><path d="M2 15 L6 13 L10 17 L16 12 L16 27 L10 22 L6 26 L2 24 Z" fill="#c27fd8"/><path d="M5 17 L5 22 L8 19.5 Z M11 19.5 L14 22 L14 17 Z" fill="#252526"/></svg>
<div class="t" style="position:absolute;left:66.20px;top:2.93px;font-family:'Liberation Sans', sans-serif;font-size:25px;line-height:32px;color:#f1f1f1;white-space:pre;font-weight:normal;letter-spacing:-0.6px">Solution 'PumaPrey-Scan' (4 projects)</div>
<svg style="position:absolute;left:22.00px;top:45.60px" width="12" height="20" viewBox="0 0 12 20"><path d="M1.5 1.5 L10 10 L1.5 18.5 Z" fill="none" stroke="#e0e0e0" stroke-width="2.4"/></svg>
<svg style="position:absolute;left:64.00px;top:43.60px" width="28" height="24" viewBox="0 0 28 24"><path d="M0 4 L0 24 L27 24 L27 4 Z" fill="#dcb67a"/><path d="M10 0 L27 0 L27 4 L10 4 Z" fill="#dcb67a"/><path d="M11 3.2 L26 3.2" stroke="#252526" stroke-width="1.6"/></svg>
<div class="t" style="position:absolute;left:102.20px;top:38.93px;font-family:'Liberation Sans', sans-serif;font-size:25px;line-height:32px;color:#f1f1f1;white-space:pre;font-weight:normal;letter-spacing:-0.6px">_Solution Items</div>
<svg style="position:absolute;left:22.00px;top:81.60px" width="12" height="20" viewBox="0 0 12 20"><path d="M1.5 1.5 L10 10 L1.5 18.5 Z" fill="none" stroke="#e0e0e0" stroke-width="2.4"/></svg>
<svg style="position:absolute;left:64.00px;top:79.60px" width="28" height="24" viewBox="0 0 28 24"><path d="M0 4 L0 24 L27 24 L27 4 Z" fill="#dcb67a"/><path d="M10 0 L27 0 L27 4 L10 4 Z" fill="#dcb67a"/><path d="M11 3.2 L26 3.2" stroke="#252526" stroke-width="1.6"/></svg>
<div class="t" style="position:absolute;left:102.20px;top:74.93px;font-family:'Liberation Sans', sans-serif;font-size:25px;line-height:32px;color:#f1f1f1;white-space:pre;font-weight:normal;letter-spacing:-0.6px">Common</div>
<svg style="position:absolute;left:22.00px;top:117.60px" width="12" height="20" viewBox="0 0 12 20"><path d="M1.5 1.5 L10 10 L1.5 18.5 Z" fill="none" stroke="#e0e0e0" stroke-width="2.4"/></svg>
<svg style="position:absolute;left:64.00px;top:115.60px" width="28" height="24" viewBox="0 0 28 24"><path d="M0 4 L0 24 L27 24 L27 4 Z" fill="#dcb67a"/><path d="M10 0 L27 0 L27 4 L10 4 Z" fill="#dcb67a"/><path d="M11 3.2 L26 3.2" stroke="#252526" stroke-width="1.6"/></svg>
<div class="t" style="position:absolute;left:102.20px;top:110.93px;font-family:'Liberation Sans', sans-serif;font-size:25px;line-height:32px;color:#f1f1f1;white-space:pre;font-weight:normal;letter-spacing:-0.6px">Data</div>
<svg style="position:absolute;left:22.00px;top:156.60px" width="14" height="14" viewBox="0 0 14 14"><path d="M13 0 L13 13 L0 13 Z" fill="#e0e0e0"/></svg>
<svg style="position:absolute;left:62.00px;top:151.60px" width="30" height="24" viewBox="0 0 30 24"><path d="M3 3 L3 23 M3 23 L28 23 L28 1 L12 1" stroke="#dcb67a" stroke-width="3" fill="none"/><path d="M12 1 L12 4 L28 4" stroke="#dcb67a" stroke-width="2.5" fill="none"/><path d="M0 12 L20 8 L28 21 L28 24 L2 24 Z" fill="#dcb67a"/><path d="M4 12 L18 9" stroke="#252526" stroke-width="2"/></svg>
<div class="t" style="position:absolute;left:102.20px;top:146.93px;font-family:'Liberation Sans', sans-serif;font-size:25px;line-height:32px;color:#f1f1f1;white-space:pre;font-weight:normal;letter-spacing:-0.6px">Services</div>
<svg style="position:absolute;left:58.00px;top:189.60px" width="12" height="20" viewBox="0 0 12 20"><path d="M1.5 1.5 L10 10 L1.5 18.5 Z" fill="none" stroke="#e0e0e0" stroke-width="2.4"/></svg>
<svg style="position:absolute;left:83.70px;top:194.60px" width="12" height="15" viewBox="0 0 12 15"><path d="M3 6 L3 4 Q3 1 6 1 Q9 1 9 4 L9 6" stroke="#1ba1e2" stroke-width="2.2" fill="none"/><rect x="0.5" y="6" width="11" height="9" fill="#1ba1e2"/><rect x="5" y="9" width="2" height="3.5" fill="#252526"/></svg>
<svg style="position:absolute;left:98.00px;top:185.60px" width="29" height="28" viewBox="0 0 29 28"><path d="M2 1 L28 1 L28 27 L16 27" stroke="#c8c8c8" stroke-width="2.6" fill="none"/><rect x="2" y="1" width="26" height="6" fill="#c8c8c8"/><path d="M2 1 L2 12" stroke="#c8c8c8" stroke-width="2.6"/><circle cx="9.5" cy="18.5" r="9" fill="#89c97d" stroke="#252526" stroke-width="1.5"/><path d="M1.5 15.5 L17.5 15.5 M1.5 21.5 L17.5 21.5 M6.5 10 L6.5 27 M12.5 10 L12.5 27" stroke="#252526" stroke-width="1.6"/></svg>
<div class="t" style="position:absolute;left:138.20px;top:182.93px;font-family:'Liberation Sans', sans-serif;font-size:25px;line-height:32px;color:#f1f1f1;white-space:pre;font-weight:normal;letter-spacing:-0.6px">Fox</div>
<svg style="position:absolute;left:22.00px;top:228.60px" width="14" height="14" viewBox="0 0 14 14"><path d="M13 0 L13 13 L0 13 Z" fill="#e0e0e0"/></svg>
<svg style="position:absolute;left:62.00px;top:223.60px" width="30" height="24" viewBox="0 0 30 24"><path d="M3 3 L3 23 M3 23 L28 23 L28 1 L12 1" stroke="#dcb67a" stroke-width="3" fill="none"/><path d="M12 1 L12 4 L28 4" stroke="#dcb67a" stroke-width="2.5" fill="none"/><path d="M0 12 L20 8 L28 21 L28 24 L2 24 Z" fill="#dcb67a"/><path d="M4 12 L18 9" stroke="#252526" stroke-width="2"/></svg>
<div class="t" style="position:absolute;left:102.20px;top:218.93px;font-family:'Liberation Sans', sans-serif;font-size:25px;line-height:32px;color:#f1f1f1;white-space:pre;font-weight:normal;letter-spacing:-0.6px">Web</div>
<svg style="position:absolute;left:58.00px;top:264.60px" width="14" height="14" viewBox="0 0 14 14"><path d="M13 0 L13 13 L0 13 Z" fill="#e0e0e0"/></svg>
<svg style="position:absolute;left:83.70px;top:266.60px" width="12" height="15" viewBox="0 0 12 15"><path d="M3 6 L3 4 Q3 1 6 1 Q9 1 9 4 L9 6" stroke="#1ba1e2" stroke-width="2.2" fill="none"/><rect x="0.5" y="6" width="11" height="9" fill="#1ba1e2"/><rect x="5" y="9" width="2" height="3.5" fill="#252526"/></svg>
<svg style="position:absolute;left:98.00px;top:257.60px" width="29" height="28" viewBox="0 0 29 28"><path d="M2 1 L28 1 L28 27 L16 27" stroke="#c8c8c8" stroke-width="2.6" fill="none"/><rect x="2" y="1" width="26" height="6" fill="#c8c8c8"/><path d="M2 1 L2 12" stroke="#c8c8c8" stroke-width="2.6"/><circle cx="9.5" cy="18.5" r="9" fill="#89c97d" stroke="#252526" stroke-width="1.5"/><path d="M1.5 15.5 L17.5 15.5 M1.5 21.5 L17.5 21.5 M6.5 10 L6.5 27 M12.5 10 L12.5 27" stroke="#252526" stroke-width="1.6"/></svg>
<div class="t" style="position:absolute;left:138.20px;top:254.93px;font-family:'Liberation Sans', sans-serif;font-size:25px;line-height:32px;color:#f1f1f1;white-space:pre;font-weight:bold;letter-spacing:-1.0px">Raccoon</div>
<svg style="position:absolute;left:134.00px;top:292.60px" width="30" height="30" viewBox="0 0 30 30"><path d="M8 20 Q1 20 1.5 13.5 Q2.5 8 8 8.5 Q10 2 16 2 Q23 2 24 9 Q29 9 29 14.5 Q29 20 23 20" stroke="#d0d0d0" stroke-width="2.4" fill="none"/><path d="M11 12 L11 17 M19 12 L19 17 M9 17 L21 17 L21 20 Q21 23 15 23 Q9 23 9 20 Z M15 23 L15 30" stroke="#d0d0d0" stroke-width="2.2" fill="none"/></svg>
<div class="t" style="position:absolute;left:174.20px;top:290.93px;font-family:'Liberation Sans', sans-serif;font-size:25px;line-height:32px;color:#f1f1f1;white-space:pre;font-weight:normal;letter-spacing:-0.6px">Connected Services</div>
<svg style="position:absolute;left:94.00px;top:333.60px" width="12" height="20" viewBox="0 0 12 20"><path d="M1.5 1.5 L10 10 L1.5 18.5 Z" fill="none" stroke="#e0e0e0" stroke-width="2.4"/></svg>
<svg style="position:absolute;left:119.70px;top:338.60px" width="12" height="15" viewBox="0 0 12 15"><path d="M3 6 L3 4 Q3 1 6 1 Q9 1 9 4 L9 6" stroke="#1ba1e2" stroke-width="2.2" fill="none"/><rect x="0.5" y="6" width="11" height="9" fill="#1ba1e2"/><rect x="5" y="9" width="2" height="3.5" fill="#252526"/></svg>
<svg style="position:absolute;left:134.00px;top:328.60px" width="30" height="30" viewBox="0 0 30 30"><path d="M3 27 L15 15" stroke="#c8c8c8" stroke-width="6" stroke-linecap="round"/><path d="M14 16 Q10 9 15 4 Q19 0 25 2 L20 7 L23 10 L28 5 Q30 11 26 15 Q21 19 14 16 Z" fill="#c8c8c8"/></svg>
<div class="t" style="position:absolute;left:174.20px;top:326.93px;font-family:'Liberation Sans', sans-serif;font-size:25px;line-height:32px;color:#f1f1f1;white-space:pre;font-weight:normal;letter-spacing:-0.6px">Properties</div>
<svg style="position:absolute;left:94.00px;top:369.60px" width="12" height="20" viewBox="0 0 12 20"><path d="M1.5 1.5 L10 10 L1.5 18.5 Z" fill="none" stroke="#e0e0e0" stroke-width="2.4"/></svg>
<svg style="position:absolute;left:134.00px;top:371.60px" width="30" height="16" viewBox="0 0 30 16"><rect x="1" y="3" width="8" height="9" fill="#d0d0d0"/><rect x="17" y="1" width="12" height="13" fill="#d0d0d0"/><path d="M9 7.5 L17 7.5" stroke="#d0d0d0" stroke-width="2"/><rect x="11.5" y="6" width="3" height="3" fill="#252526"/></svg>
<div class="t" style="position:absolute;left:174.20px;top:362.93px;font-family:'Liberation Sans', sans-serif;font-size:25px;line-height:32px;color:#f1f1f1;white-space:pre;font-weight:normal;letter-spacing:-0.6px">References</div>
<svg style="position:absolute;left:136.00px;top:403.60px" width="28" height="24" viewBox="0 0 28 24"><path d="M0 4 L0 24 L27 24 L27 4 Z" fill="#dcb67a"/><path d="M10 0 L27 0 L27 4 L10 4 Z" fill="#dcb67a"/><path d="M11 3.2 L26 3.2" stroke="#252526" stroke-width="1.6"/></svg>
<div class="t" style="position:absolute;left:174.20px;top:398.93px;font-family:'Liberation Sans', sans-serif;font-size:25px;line-height:32px;color:#f1f1f1;white-space:pre;font-weight:normal;letter-spacing:-0.6px">App_Data</div>
<svg style="position:absolute;left:94.00px;top:441.60px" width="12" height="20" viewBox="0 0 12 20"><path d="M1.5 1.5 L10 10 L1.5 18.5 Z" fill="none" stroke="#e0e0e0" stroke-width="2.4"/></svg>
<svg style="position:absolute;left:136.00px;top:439.60px" width="28" height="24" viewBox="0 0 28 24"><path d="M0 4 L0 24 L27 24 L27 4 Z" fill="#dcb67a"/><path d="M10 0 L27 0 L27 4 L10 4 Z" fill="#dcb67a"/><path d="M11 3.2 L26 3.2" stroke="#252526" stroke-width="1.6"/></svg>
<div class="t" style="position:absolute;left:174.20px;top:434.93px;font-family:'Liberation Sans', sans-serif;font-size:25px;line-height:32px;color:#f1f1f1;white-space:pre;font-weight:normal;letter-spacing:-0.6px">App_Start</div>
<svg style="position:absolute;left:94.00px;top:477.60px" width="12" height="20" viewBox="0 0 12 20"><path d="M1.5 1.5 L10 10 L1.5 18.5 Z" fill="none" stroke="#e0e0e0" stroke-width="2.4"/></svg>
<svg style="position:absolute;left:136.00px;top:475.60px" width="28" height="24" viewBox="0 0 28 24"><path d="M0 4 L0 24 L27 24 L27 4 Z" fill="#dcb67a"/><path d="M10 0 L27 0 L27 4 L10 4 Z" fill="#dcb67a"/><path d="M11 3.2 L26 3.2" stroke="#252526" stroke-width="1.6"/></svg>
<div class="t" style="position:absolute;left:174.20px;top:470.93px;font-family:'Liberation Sans', sans-serif;font-size:25px;line-height:32px;color:#f1f1f1;white-space:pre;font-weight:normal;letter-spacing:-0.6px">Content</div>
<svg style="position:absolute;left:94.00px;top:516.60px" width="14" height="14" viewBox="0 0 14 14"><path d="M13 0 L13 13 L0 13 Z" fill="#e0e0e0"/></svg>
<svg style="position:absolute;left:134.00px;top:511.60px" width="30" height="24" viewBox="0 0 30 24"><path d="M3 3 L3 23 M3 23 L28 23 L28 1 L12 1" stroke="#dcb67a" stroke-width="3" fill="none"/><path d="M12 1 L12 4 L28 4" stroke="#dcb67a" stroke-width="2.5" fill="none"/><path d="M0 12 L20 8 L28 21 L28 24 L2 24 Z" fill="#dcb67a"/><path d="M4 12 L18 9" stroke="#252526" stroke-width="2"/></svg>
<div class="t" style="position:absolute;left:174.20px;top:506.93px;font-family:'Liberation Sans', sans-serif;font-size:25px;line-height:32px;color:#f1f1f1;white-space:pre;font-weight:normal;letter-spacing:-0.6px">Controllers</div>
<svg style="position:absolute;left:130.00px;top:549.60px" width="12" height="20" viewBox="0 0 12 20"><path d="M1.5 1.5 L10 10 L1.5 18.5 Z" fill="none" stroke="#e0e0e0" stroke-width="2.4"/></svg>
<svg style="position:absolute;left:155.70px;top:554.60px" width="12" height="15" viewBox="0 0 12 15"><path d="M3 6 L3 4 Q3 1 6 1 Q9 1 9 4 L9 6" stroke="#1ba1e2" stroke-width="2.2" fill="none"/><rect x="0.5" y="6" width="11" height="9" fill="#1ba1e2"/><rect x="5" y="9" width="2" height="3.5" fill="#252526"/></svg>
<svg style="position:absolute;left:174.00px;top:551.60px" width="24" height="16" viewBox="0 0 24 16"><path d="M10.5 3.8 Q9 1.8 6.5 1.8 Q1.8 1.8 1.8 8 Q1.8 14.2 6.5 14.2 Q9 14.2 10.5 12.2" stroke="#89c97d" stroke-width="3.4" fill="none"/><path d="M14 3.6 L23 3.6 M14 7.8 L23 7.8 M16.6 0.5 L16.6 10.5 M20.4 0.5 L20.4 10.5" stroke="#89c97d" stroke-width="2.2"/></svg>
<div class="t" style="position:absolute;left:210.20px;top:542.93px;font-family:'Liberation Sans', sans-serif;font-size:25px;line-height:32px;color:#f1f1f1;white-space:pre;font-weight:normal;letter-spacing:-0.6px">AccountController.cs</div>
<svg style="position:absolute;left:130.00px;top:585.60px" width="12" height="20" viewBox="0 0 12 20"><path d="M1.5 1.5 L10 10 L1.5 18.5 Z" fill="none" stroke="#e0e0e0" stroke-width="2.4"/></svg>
<svg style="position:absolute;left:155.70px;top:590.60px" width="12" height="15" viewBox="0 0 12 15"><path d="M3 6 L3 4 Q3 1 6 1 Q9 1 9 4 L9 6" stroke="#1ba1e2" stroke-width="2.2" fill="none"/><rect x="0.5" y="6" width="11" height="9" fill="#1ba1e2"/><rect x="5" y="9" width="2" height="3.5" fill="#252526"/></svg>
<svg style="position:absolute;left:174.00px;top:587.60px" width="24" height="16" viewBox="0 0 24 16"><path d="M10.5 3.8 Q9 1.8 6.5 1.8 Q1.8 1.8 1.8 8 Q1.8 14.2 6.5 14.2 Q9 14.2 10.5 12.2" stroke="#89c97d" stroke-width="3.4" fill="none"/><path d="M14 3.6 L23 3.6 M14 7.8 L23 7.8 M16.6 0.5 L16.6 10.5 M20.4 0.5 L20.4 10.5" stroke="#89c97d" stroke-width="2.2"/></svg>
<div class="t" style="position:absolute;left:210.20px;top:578.93px;font-family:'Liberation Sans', sans-serif;font-size:25px;line-height:32px;color:#f1f1f1;white-space:pre;font-weight:normal;letter-spacing:-0.6px">HomeController.cs</div>
<div style="position:absolute;left:0.6px;top:613.60px;width:553.4px;height:36px;background:#3f3f46"></div>
<svg style="position:absolute;left:130.00px;top:621.60px" width="12" height="20" viewBox="0 0 12 20"><path d="M1.5 1.5 L10 10 L1.5 18.5 Z" fill="none" stroke="#e0e0e0" stroke-width="2.4"/></svg>
<svg style="position:absolute;left:155.70px;top:625.60px" width="13" height="14" viewBox="0 0 13 14"><path d="M1 8 L5 12 L12 1" stroke="#e51400" stroke-width="3" fill="none"/></svg>
<svg style="position:absolute;left:174.00px;top:623.60px" width="24" height="16" viewBox="0 0 24 16"><path d="M10.5 3.8 Q9 1.8 6.5 1.8 Q1.8 1.8 1.8 8 Q1.8 14.2 6.5 14.2 Q9 14.2 10.5 12.2" stroke="#89c97d" stroke-width="3.4" fill="none"/><path d="M14 3.6 L23 3.6 M14 7.8 L23 7.8 M16.6 0.5 L16.6 10.5 M20.4 0.5 L20.4 10.5" stroke="#89c97d" stroke-width="2.2"/></svg>
<div class="t" style="position:absolute;left:210.20px;top:614.93px;font-family:'Liberation Sans', sans-serif;font-size:25px;line-height:32px;color:#f1f1f1;white-space:pre;font-weight:normal;letter-spacing:-0.6px">HuntController.cs</div>
<svg style="position:absolute;left:130.00px;top:657.60px" width="12" height="20" viewBox="0 0 12 20"><path d="M1.5 1.5 L10 10 L1.5 18.5 Z" fill="none" stroke="#e0e0e0" stroke-width="2.4"/></svg>
<svg style="position:absolute;left:155.70px;top:662.60px" width="12" height="15" viewBox="0 0 12 15"><path d="M3 6 L3 4 Q3 1 6 1 Q9 1 9 4 L9 6" stroke="#1ba1e2" stroke-width="2.2" fill="none"/><rect x="0.5" y="6" width="11" height="9" fill="#1ba1e2"/><rect x="5" y="9" width="2" height="3.5" fill="#252526"/></svg>
<svg style="position:absolute;left:174.00px;top:659.60px" width="24" height="16" viewBox="0 0 24 16"><path d="M10.5 3.8 Q9 1.8 6.5 1.8 Q1.8 1.8 1.8 8 Q1.8 14.2 6.5 14.2 Q9 14.2 10.5 12.2" stroke="#89c97d" stroke-width="3.4" fill="none"/><path d="M14 3.6 L23 3.6 M14 7.8 L23 7.8 M16.6 0.5 L16.6 10.5 M20.4 0.5 L20.4 10.5" stroke="#89c97d" stroke-width="2.2"/></svg>
<div class="t" style="position:absolute;left:210.20px;top:650.93px;font-family:'Liberation Sans', sans-serif;font-size:25px;line-height:32px;color:#f1f1f1;white-space:pre;font-weight:normal;letter-spacing:-0.6px">ManageController.cs</div>
<svg style="position:absolute;left:94.00px;top:693.60px" width="12" height="20" viewBox="0 0 12 20"><path d="M1.5 1.5 L10 10 L1.5 18.5 Z" fill="none" stroke="#e0e0e0" stroke-width="2.4"/></svg>
<svg style="position:absolute;left:136.00px;top:691.60px" width="28" height="24" viewBox="0 0 28 24"><path d="M0 4 L0 24 L27 24 L27 4 Z" fill="#dcb67a"/><path d="M10 0 L27 0 L27 4 L10 4 Z" fill="#dcb67a"/><path d="M11 3.2 L26 3.2" stroke="#252526" stroke-width="1.6"/></svg>
<div class="t" style="position:absolute;left:174.20px;top:686.93px;font-family:'Liberation Sans', sans-serif;font-size:25px;line-height:32px;color:#f1f1f1;white-space:pre;font-weight:normal;letter-spacing:-0.6px">Images</div>
<svg style="position:absolute;left:94.00px;top:729.60px" width="12" height="20" viewBox="0 0 12 20"><path d="M1.5 1.5 L10 10 L1.5 18.5 Z" fill="none" stroke="#e0e0e0" stroke-width="2.4"/></svg>
<svg style="position:absolute;left:136.00px;top:727.60px" width="28" height="24" viewBox="0 0 28 24"><path d="M0 4 L0 24 L27 24 L27 4 Z" fill="#dcb67a"/><path d="M10 0 L27 0 L27 4 L10 4 Z" fill="#dcb67a"/><path d="M11 3.2 L26 3.2" stroke="#252526" stroke-width="1.6"/></svg>
<div class="t" style="position:absolute;left:174.20px;top:722.93px;font-family:'Liberation Sans', sans-serif;font-size:25px;line-height:32px;color:#f1f1f1;white-space:pre;font-weight:normal;letter-spacing:-0.6px">Models</div>
<svg style="position:absolute;left:94.00px;top:765.60px" width="12" height="20" viewBox="0 0 12 20"><path d="M1.5 1.5 L10 10 L1.5 18.5 Z" fill="none" stroke="#e0e0e0" stroke-width="2.4"/></svg>
<svg style="position:absolute;left:136.00px;top:763.60px" width="28" height="24" viewBox="0 0 28 24"><path d="M0 4 L0 24 L27 24 L27 4 Z" fill="#dcb67a"/><path d="M10 0 L27 0 L27 4 L10 4 Z" fill="#dcb67a"/><path d="M11 3.2 L26 3.2" stroke="#252526" stroke-width="1.6"/></svg>
<div class="t" style="position:absolute;left:174.20px;top:758.93px;font-family:'Liberation Sans', sans-serif;font-size:25px;line-height:32px;color:#f1f1f1;white-space:pre;font-weight:normal;letter-spacing:-0.6px">Scripts</div>
<svg style="position:absolute;left:94.00px;top:801.60px" width="12" height="20" viewBox="0 0 12 20"><path d="M1.5 1.5 L10 10 L1.5 18.5 Z" fill="none" stroke="#e0e0e0" stroke-width="2.4"/></svg>
<svg style="position:absolute;left:136.00px;top:799.60px" width="28" height="24" viewBox="0 0 28 24"><path d="M0 4 L0 24 L27 24 L27 4 Z" fill="#dcb67a"/><path d="M10 0 L27 0 L27 4 L10 4 Z" fill="#dcb67a"/><path d="M11 3.2 L26 3.2" stroke="#252526" stroke-width="1.6"/></svg>
<div class="t" style="position:absolute;left:174.20px;top:794.93px;font-family:'Liberation Sans', sans-serif;font-size:25px;line-height:32px;color:#f1f1f1;white-space:pre;font-weight:normal;letter-spacing:-0.6px">Views</div>
<svg style="position:absolute;left:119.70px;top:842.60px" width="12" height="15" viewBox="0 0 12 15"><path d="M3 6 L3 4 Q3 1 6 1 Q9 1 9 4 L9 6" stroke="#1ba1e2" stroke-width="2.2" fill="none"/><rect x="0.5" y="6" width="11" height="9" fill="#1ba1e2"/><rect x="5" y="9" width="2" height="3.5" fill="#252526"/></svg>
<svg style="position:absolute;left:138.00px;top:834.60px" width="22" height="26" viewBox="0 0 22 26"><path d="M1 1 L15 1 L21 7 L21 25 L1 25 Z" fill="none" stroke="#c8c8c8" stroke-width="2.4"/><path d="M5 6 L8 6 M10 10 L13 10 M5 14 L8 14 M12 17 L15 17 M6 19 L9 21 M9 19 L6 21" stroke="#c8c8c8" stroke-width="2"/></svg>
<div class="t" style="position:absolute;left:174.20px;top:830.93px;font-family:'Liberation Sans', sans-serif;font-size:25px;line-height:32px;color:#f1f1f1;white-space:pre;font-weight:normal;letter-spacing:-0.6px">favicon.ico</div>
<svg style="position:absolute;left:94.00px;top:873.60px" width="12" height="20" viewBox="0 0 12 20"><path d="M1.5 1.5 L10 10 L1.5 18.5 Z" fill="none" stroke="#e0e0e0" stroke-width="2.4"/></svg>
<svg style="position:absolute;left:119.70px;top:878.60px" width="12" height="15" viewBox="0 0 12 15"><path d="M3 6 L3 4 Q3 1 6 1 Q9 1 9 4 L9 6" stroke="#1ba1e2" stroke-width="2.2" fill="none"/><rect x="0.5" y="6" width="11" height="9" fill="#1ba1e2"/><rect x="5" y="9" width="2" height="3.5" fill="#252526"/></svg>
<svg style="position:absolute;left:133.00px;top:868.60px" width="30" height="30" viewBox="0 0 30 30"><path d="M10 1 L20 1 L27 8 L27 27 L17 27" fill="none" stroke="#c8c8c8" stroke-width="2.4"/><path d="M10 1 L10 10" stroke="#c8c8c8" stroke-width="2.4"/><circle cx="8" cy="21" r="5.5" fill="none" stroke="#9a9a9a" stroke-width="3.5" stroke-dasharray="2.2 1.5"/><circle cx="8" cy="21" r="2" fill="#9a9a9a"/></svg>
<div class="t" style="position:absolute;left:174.20px;top:866.93px;font-family:'Liberation Sans', sans-serif;font-size:25px;line-height:32px;color:#f1f1f1;white-space:pre;font-weight:normal;letter-spacing:-0.6px">Global.asax</div>
<svg style="position:absolute;left:94.00px;top:909.60px" width="12" height="20" viewBox="0 0 12 20"><path d="M1.5 1.5 L10 10 L1.5 18.5 Z" fill="none" stroke="#e0e0e0" stroke-width="2.4"/></svg>
<svg style="position:absolute;left:119.70px;top:914.60px" width="12" height="15" viewBox="0 0 12 15"><path d="M3 6 L3 4 Q3 1 6 1 Q9 1 9 4 L9 6" stroke="#1ba1e2" stroke-width="2.2" fill="none"/><rect x="0.5" y="6" width="11" height="9" fill="#1ba1e2"/><rect x="5" y="9" width="2" height="3.5" fill="#252526"/></svg>
<svg style="position:absolute;left:138.00px;top:911.60px" width="24" height="16" viewBox="0 0 24 16"><path d="M10.5 3.8 Q9 1.8 6.5 1.8 Q1.8 1.8 1.8 8 Q1.8 14.2 6.5 14.2 Q9 14.2 10.5 12.2" stroke="#89c97d" stroke-width="3.4" fill="none"/><path d="M14 3.6 L23 3.6 M14 7.8 L23 7.8 M16.6 0.5 L16.6 10.5 M20.4 0.5 L20.4 10.5" stroke="#89c97d" stroke-width="2.2"/></svg>
<div class="t" style="position:absolute;left:174.20px;top:902.93px;font-family:'Liberation Sans', sans-serif;font-size:25px;line-height:32px;color:#f1f1f1;white-space:pre;font-weight:normal;letter-spacing:-0.6px">HuntUtil.cs</div>
<svg style="position:absolute;left:119.70px;top:950.60px" width="12" height="15" viewBox="0 0 12 15"><path d="M3 6 L3 4 Q3 1 6 1 Q9 1 9 4 L9 6" stroke="#1ba1e2" stroke-width="2.2" fill="none"/><rect x="0.5" y="6" width="11" height="9" fill="#1ba1e2"/><rect x="5" y="9" width="2" height="3.5" fill="#252526"/></svg>
<svg style="position:absolute;left:133.00px;top:940.60px" width="30" height="30" viewBox="0 0 30 30"><path d="M10 1 L20 1 L27 8 L27 27 L14 27" fill="none" stroke="#c8c8c8" stroke-width="2.4"/><path d="M10 1 L10 9" stroke="#c8c8c8" stroke-width="2.4"/><path d="M3 12 L3 18 Q3 21 6 21 Q9 21 9 18 L9 12 M6 21 L6 29" stroke="#c8c8c8" stroke-width="2.6" fill="none"/><path d="M6 12 L6 16" stroke="#c8c8c8" stroke-width="2"/></svg>
<div class="t" style="position:absolute;left:174.20px;top:938.93px;font-family:'Liberation Sans', sans-serif;font-size:25px;line-height:32px;color:#f1f1f1;white-space:pre;font-weight:normal;letter-spacing:-0.6px">packages.config</div>
<svg style="position:absolute;left:119.70px;top:986.60px" width="12" height="15" viewBox="0 0 12 15"><path d="M3 6 L3 4 Q3 1 6 1 Q9 1 9 4 L9 6" stroke="#1ba1e2" stroke-width="2.2" fill="none"/><rect x="0.5" y="6" width="11" height="9" fill="#1ba1e2"/><rect x="5" y="9" width="2" height="3.5" fill="#252526"/></svg>
<svg style="position:absolute;left:138.00px;top:978.60px" width="22" height="26" viewBox="0 0 22 26"><path d="M1 1 L15 1 L21 7 L21 25 L1 25 Z" fill="none" stroke="#c8c8c8" stroke-width="2.4"/><path d="M5 9 L12 9 M5 13 L17 13 M5 17 L17 17 M5 21 L17 21" stroke="#c8c8c8" stroke-width="2"/></svg>
<div class="t" style="position:absolute;left:174.20px;top:974.93px;font-family:'Liberation Sans', sans-serif;font-size:25px;line-height:32px;color:#f1f1f1;white-space:pre;font-weight:normal;letter-spacing:-0.6px">README.md</div>
<svg style="position:absolute;left:94.00px;top:1017.60px" width="12" height="20" viewBox="0 0 12 20"><path d="M1.5 1.5 L10 10 L1.5 18.5 Z" fill="none" stroke="#e0e0e0" stroke-width="2.4"/></svg>
<svg style="position:absolute;left:119.70px;top:1022.60px" width="12" height="15" viewBox="0 0 12 15"><path d="M3 6 L3 4 Q3 1 6 1 Q9 1 9 4 L9 6" stroke="#1ba1e2" stroke-width="2.2" fill="none"/><rect x="0.5" y="6" width="11" height="9" fill="#1ba1e2"/><rect x="5" y="9" width="2" height="3.5" fill="#252526"/></svg>
<svg style="position:absolute;left:138.00px;top:1019.60px" width="24" height="16" viewBox="0 0 24 16"><path d="M10.5 3.8 Q9 1.8 6.5 1.8 Q1.8 1.8 1.8 8 Q1.8 14.2 6.5 14.2 Q9 14.2 10.5 12.2" stroke="#89c97d" stroke-width="3.4" fill="none"/><path d="M14 3.6 L23 3.6 M14 7.8 L23 7.8 M16.6 0.5 L16.6 10.5 M20.4 0.5 L20.4 10.5" stroke="#89c97d" stroke-width="2.2"/></svg>
<div class="t" style="position:absolute;left:174.20px;top:1010.93px;font-family:'Liberation Sans', sans-serif;font-size:25px;line-height:32px;color:#f1f1f1;white-space:pre;font-weight:normal;letter-spacing:-0.6px">Startup.cs</div>
<svg style="position:absolute;left:94.00px;top:1053.60px" width="12" height="20" viewBox="0 0 12 20"><path d="M1.5 1.5 L10 10 L1.5 18.5 Z" fill="none" stroke="#e0e0e0" stroke-width="2.4"/></svg>
<svg style="position:absolute;left:119.70px;top:1058.60px" width="12" height="15" viewBox="0 0 12 15"><path d="M3 6 L3 4 Q3 1 6 1 Q9 1 9 4 L9 6" stroke="#1ba1e2" stroke-width="2.2" fill="none"/><rect x="0.5" y="6" width="11" height="9" fill="#1ba1e2"/><rect x="5" y="9" width="2" height="3.5" fill="#252526"/></svg>
<svg style="position:absolute;left:133.00px;top:1048.60px" width="30" height="30" viewBox="0 0 30 30"><path d="M10 1 L20 1 L27 8 L27 27 L14 27" fill="none" stroke="#c8c8c8" stroke-width="2.4"/><path d="M10 1 L10 9" stroke="#c8c8c8" stroke-width="2.4"/><path d="M3 12 L3 18 Q3 21 6 21 Q9 21 9 18 L9 12 M6 21 L6 29" stroke="#c8c8c8" stroke-width="2.6" fill="none"/><path d="M6 12 L6 16" stroke="#c8c8c8" stroke-width="2"/></svg>
<div class="t" style="position:absolute;left:174.20px;top:1046.93px;font-family:'Liberation Sans', sans-serif;font-size:25px;line-height:32px;color:#f1f1f1;white-space:pre;font-weight:normal;letter-spacing:-0.6px">Web.config</div>
</div>
<div style="position:absolute;left:2075.3px;top:1420.8px;width:97.2px;height:41.2px;background:#252526;border:1.5px solid #3f3f46;border-top:none;box-sizing:border-box"></div>
<div class="t" style="position:absolute;left:2087.4px;top:1425.23px;font-family:'Liberation Sans', sans-serif;font-size:23px;line-height:30px;color:#0097fb;white-space:pre;font-weight:normal;letter-spacing:-0.5px;">Solut...</div>
<div class="t" style="position:absolute;left:2186px;top:1425.23px;font-family:'Liberation Sans', sans-serif;font-size:23px;line-height:30px;color:#d0d0d0;white-space:pre;font-weight:normal;letter-spacing:-0.5px;">Find...</div>
<div class="t" style="position:absolute;left:2285.5px;top:1425.23px;font-family:'Liberation Sans', sans-serif;font-size:23px;line-height:30px;color:#d0d0d0;white-space:pre;font-weight:normal;letter-spacing:-0.5px;">Prop...</div>
<div class="t" style="position:absolute;left:2383.7px;top:1425.23px;font-family:'Liberation Sans', sans-serif;font-size:23px;line-height:30px;color:#d0d0d0;white-space:pre;font-weight:normal;letter-spacing:-0.5px;">Tea...</div>
<div class="t" style="position:absolute;left:2481.9px;top:1425.23px;font-family:'Liberation Sans', sans-serif;font-size:23px;line-height:30px;color:#d0d0d0;white-space:pre;font-weight:normal;letter-spacing:-0.5px;">GitH...</div>
<div class="t" style="position:absolute;left:2581.3px;top:1425.23px;font-family:'Liberation Sans', sans-serif;font-size:23px;line-height:30px;color:#d0d0d0;white-space:pre;font-weight:normal;letter-spacing:-0.5px;">Notif...</div>
</body></html>
